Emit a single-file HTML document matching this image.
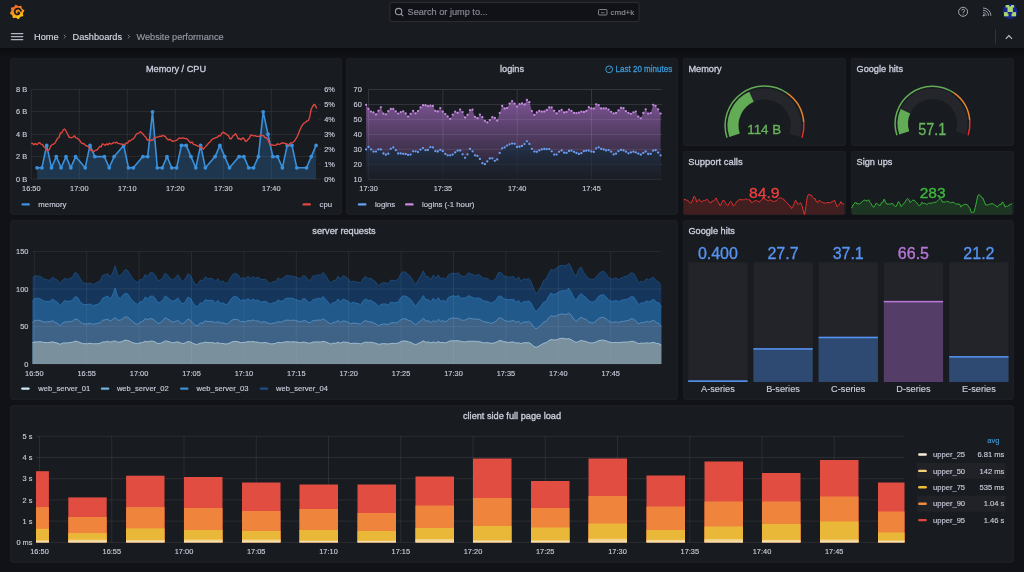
<!DOCTYPE html>
<html><head><meta charset="utf-8"><style>
html,body{margin:0;padding:0;background:#111217;width:1024px;height:572px;overflow:hidden}
svg{display:block;font-family:"Liberation Sans", sans-serif;will-change:transform}
</style></head><body>
<svg width="1024" height="572" viewBox="0 0 1024 572">
<rect width="1024" height="572" fill="#111217"/>
<rect x="0" y="0" width="1024" height="24" fill="#181b1f" />
<line x1="0" y1="24.5" x2="1024" y2="24.5" stroke="rgba(204,204,220,0.06)" stroke-width="1" />
<rect x="0" y="25" width="1024" height="23" fill="#181b1f" />
<defs><linearGradient id="sh" x1="0" y1="0" x2="0" y2="1"><stop offset="0" stop-color="#0b0c0f"/><stop offset="0.6" stop-color="#0e0f12"/><stop offset="1" stop-color="#111217"/></linearGradient></defs>
<rect x="0" y="48" width="1024" height="9" fill="url(#sh)" />
<defs><linearGradient id="lg" x1="0" y1="0" x2="0.3" y2="1"><stop offset="0" stop-color="#f0502a"/><stop offset="0.5" stop-color="#f58a1f"/><stop offset="1" stop-color="#fbc80b"/></linearGradient></defs>
<polygon points="18.3,6.1 18.5,6.1 18.8,6.1 19.0,6.0 19.3,6.0 19.6,5.9 19.9,5.9 20.2,5.8 20.6,5.8 20.9,5.7 21.3,5.7 21.4,6.0 21.5,6.4 21.6,6.7 21.6,7.0 21.7,7.3 21.7,7.6 21.8,7.9 21.9,8.2 21.9,8.4 22.0,8.6 22.2,8.8 22.4,9.0 22.6,9.1 22.8,9.3 23.1,9.4 23.3,9.6 23.6,9.8 23.9,10.0 24.2,10.2 24.5,10.5 24.3,10.8 24.1,11.1 23.9,11.4 23.7,11.7 23.6,11.9 23.4,12.2 23.2,12.4 23.1,12.6 23.0,12.9 22.9,13.1 22.9,13.3 22.9,13.6 23.0,13.8 23.0,14.1 23.1,14.4 23.1,14.7 23.2,15.0 23.2,15.4 23.3,15.7 23.3,16.1 23.0,16.2 22.6,16.3 22.3,16.4 22.0,16.4 21.7,16.5 21.4,16.5 21.1,16.6 20.8,16.7 20.6,16.7 20.4,16.8 20.2,17.0 20.0,17.2 19.9,17.4 19.7,17.6 19.6,17.9 19.4,18.1 19.2,18.4 19.0,18.7 18.8,19.0 18.5,19.3 18.2,19.1 17.9,18.9 17.6,18.7 17.3,18.5 17.1,18.4 16.8,18.2 16.6,18.0 16.4,17.9 16.1,17.8 15.9,17.7 15.7,17.7 15.4,17.7 15.2,17.8 14.9,17.8 14.6,17.9 14.3,17.9 14.0,18.0 13.6,18.0 13.3,18.1 12.9,18.1 12.8,17.8 12.7,17.4 12.6,17.1 12.6,16.8 12.5,16.5 12.5,16.2 12.4,15.9 12.3,15.6 12.3,15.4 12.2,15.2 12.0,15.0 11.8,14.8 11.6,14.7 11.4,14.5 11.1,14.4 10.9,14.2 10.6,14.0 10.3,13.8 10.0,13.6 9.7,13.3 9.9,13.0 10.1,12.7 10.3,12.4 10.5,12.1 10.6,11.9 10.8,11.6 11.0,11.4 11.1,11.2 11.2,10.9 11.3,10.7 11.3,10.5 11.3,10.2 11.2,10.0 11.2,9.7 11.1,9.4 11.1,9.1 11.0,8.8 11.0,8.4 10.9,8.1 10.9,7.7 11.2,7.6 11.6,7.5 11.9,7.4 12.2,7.4 12.5,7.3 12.8,7.3 13.1,7.2 13.4,7.1 13.6,7.1 13.8,7.0 14.0,6.8 14.2,6.6 14.3,6.4 14.5,6.2 14.6,5.9 14.8,5.7 15.0,5.4 15.2,5.1 15.4,4.8 15.7,4.5 16.0,4.7 16.3,4.9 16.6,5.1 16.9,5.3 17.1,5.4 17.4,5.6 17.6,5.8 17.8,5.9 18.1,6.0" fill="url(#lg)"/>
<polyline points="21.0,10.9 20.9,10.6 20.7,10.4 20.6,10.1 20.5,9.9 20.3,9.7 20.1,9.5 19.9,9.4 19.7,9.2 19.5,9.1 19.3,8.9 19.1,8.8 18.9,8.7 18.6,8.7 18.4,8.6 18.2,8.6 17.9,8.6 17.7,8.6 17.5,8.6 17.2,8.6 17.0,8.6 16.8,8.7 16.6,8.8 16.4,8.9 16.2,9.0 16.0,9.1 15.8,9.2 15.7,9.4 15.5,9.6 15.4,9.7 15.2,9.9 15.1,10.1 15.0,10.3 14.9,10.5 14.9,10.7 14.8,10.9 14.8,11.1 14.7,11.3 14.7,11.5 14.7,11.7 14.7,11.9 14.8,12.1 14.8,12.3 14.9,12.5 14.9,12.7 15.0,12.8 15.1,13.0 15.2,13.2 15.3,13.3 15.4,13.5 15.6,13.6 15.7,13.7 15.8,13.9 16.0,14.0 16.1,14.1 16.3,14.1 16.5,14.2 16.6,14.3 16.8,14.3 17.0,14.4 17.1,14.4 17.3,14.4 17.4,14.4 17.6,14.4 17.8,14.4 17.9,14.3 18.1,14.3 18.2,14.2 18.3,14.2 18.5,14.1 18.6,14.1 18.7,14.0 18.8,13.9 18.9,13.8 19.0,13.7 19.1,13.6 19.1,13.5 19.2,13.4 19.2,13.3 19.3,13.2" fill="none" stroke="#181b1f" stroke-width="1.7" stroke-linecap="round"/>
<circle cx="18.5" cy="12.5" r="1.1" fill="#181b1f"/>
<rect x="390" y="2.5" width="249" height="19" rx="2" fill="#111217" stroke="rgba(204,204,220,0.12)" stroke-width="1"/>
<circle cx="398.6" cy="11.6" r="3.2" fill="none" stroke="#9a9aa6" stroke-width="1.1"/><line x1="400.9" y1="13.9" x2="403.2" y2="16.2" stroke="#9a9aa6" stroke-width="1.1"/>
<text x="407.5" y="15.2" font-size="9.2" fill="#8e8e9a" stroke="#8e8e9a" stroke-width="0.14" text-anchor="start" font-weight="normal" >Search or jump to...</text>
<rect x="598.5" y="9.5" width="8.5" height="5.5" rx="1" fill="none" stroke="#8e8e9a" stroke-width="0.9"/><line x1="601" y1="12.8" x2="604.5" y2="12.8" stroke="#8e8e9a" stroke-width="0.8"/>
<text x="610.5" y="14.8" font-size="8" fill="#8e8e9a" stroke="#8e8e9a" stroke-width="0.14" text-anchor="start" font-weight="normal" >cmd+k</text>
<circle cx="963.1" cy="11.8" r="4.5" fill="none" stroke="#a8a8b4" stroke-width="1"/>
<path d="M961.6,10.6 A1.5,1.5 0 1 1 963.2,12.2 L963.2,12.9" fill="none" stroke="#a8a8b4" stroke-width="0.9"/><circle cx="963.2" cy="14.2" r="0.5" fill="#a8a8b4"/>
<circle cx="983.8" cy="15.3" r="1.1" fill="#a8a8b4"/><path d="M983,12.6 A3,3 0 0 1 986.2,15.8 M983,10.3 A5.4,5.4 0 0 1 988.6,15.8 M983,8 A7.7,7.7 0 0 1 990.9,15.8" fill="none" stroke="#a8a8b4" stroke-width="0.9"/>
<circle cx="1010" cy="11.5" r="7.4" fill="#17258f"/>
<g fill="#a9d673"><rect x="1005.6" y="5.1" width="8.6" height="2.4" rx="0.6"/><rect x="1007.5" y="7" width="5.4" height="5.6"/><rect x="1004" y="12.1" width="12.1" height="4.2"/></g>
<g fill="#17258f"><rect x="1009" y="4.6" width="2.2" height="1.8" rx="0.8"/><rect x="1007.4" y="12.1" width="5.2" height="1.7" rx="0.8"/><rect x="1008.5" y="13" width="3" height="4"/></g>
<line x1="11.4" y1="33.5" x2="22.8" y2="33.5" stroke="#b4b4c0" stroke-width="1.25" stroke-linecap="round"/>
<line x1="11.4" y1="36.55" x2="22.8" y2="36.55" stroke="#b4b4c0" stroke-width="1.25" stroke-linecap="round"/>
<line x1="11.4" y1="39.6" x2="22.8" y2="39.6" stroke="#b4b4c0" stroke-width="1.25" stroke-linecap="round"/>
<text x="34.0" y="39.6" font-size="9.2" fill="#d8d8e4" stroke="#d8d8e4" stroke-width="0.14" text-anchor="start" font-weight="normal" >Home</text>
<path d="M63.8,34.8 L65.8,36.6 L63.8,38.4" fill="none" stroke="#8e8e9a" stroke-width="0.8"/>
<text x="72.5" y="39.6" font-size="9.2" fill="#d8d8e4" stroke="#d8d8e4" stroke-width="0.14" text-anchor="start" font-weight="normal" >Dashboards</text>
<path d="M127.8,34.8 L129.8,36.6 L127.8,38.4" fill="none" stroke="#8e8e9a" stroke-width="0.8"/>
<text x="136.5" y="39.6" font-size="9.2" fill="#9a9aa6" stroke="#9a9aa6" stroke-width="0.14" text-anchor="start" font-weight="normal" >Website performance</text>
<line x1="995.5" y1="29.5" x2="995.5" y2="43.5" stroke="rgba(204,204,220,0.15)" stroke-width="1" />
<path d="M1005.8,38.8 L1008.9,35.6 L1012,38.8" fill="none" stroke="#c4c4d0" stroke-width="1.1"/>
<rect x="10.5" y="58.5" width="331" height="156" rx="2" fill="#181b1f" stroke="rgba(204,204,220,0.045)" stroke-width="1"/>
<text x="176.0" y="71.8" font-size="9.2" fill="#ccccdc" stroke="#ccccdc" stroke-width="0.32" text-anchor="middle" font-weight="normal" >Memory / CPU</text>
<line x1="31.3" y1="179.0" x2="318" y2="179.0" stroke="rgba(204,204,220,0.10)" stroke-width="1" />
<text x="27.2" y="181.6" font-size="7.4" fill="#ccccdc" stroke="#ccccdc" stroke-width="0.14" text-anchor="end" font-weight="normal" >0 B</text>
<line x1="31.3" y1="156.4" x2="318" y2="156.4" stroke="rgba(204,204,220,0.10)" stroke-width="1" />
<text x="27.2" y="159.0" font-size="7.4" fill="#ccccdc" stroke="#ccccdc" stroke-width="0.14" text-anchor="end" font-weight="normal" >2 B</text>
<line x1="31.3" y1="134.3" x2="318" y2="134.3" stroke="rgba(204,204,220,0.10)" stroke-width="1" />
<text x="27.2" y="136.9" font-size="7.4" fill="#ccccdc" stroke="#ccccdc" stroke-width="0.14" text-anchor="end" font-weight="normal" >4 B</text>
<line x1="31.3" y1="111.6" x2="318" y2="111.6" stroke="rgba(204,204,220,0.10)" stroke-width="1" />
<text x="27.2" y="114.2" font-size="7.4" fill="#ccccdc" stroke="#ccccdc" stroke-width="0.14" text-anchor="end" font-weight="normal" >6 B</text>
<line x1="31.3" y1="89.4" x2="318" y2="89.4" stroke="rgba(204,204,220,0.10)" stroke-width="1" />
<text x="27.2" y="92.0" font-size="7.4" fill="#ccccdc" stroke="#ccccdc" stroke-width="0.14" text-anchor="end" font-weight="normal" >8 B</text>
<line x1="318" y1="179.0" x2="321" y2="179.0" stroke="rgba(204,204,220,0.10)" stroke-width="1" />
<text x="324.2" y="181.6" font-size="7.4" fill="#ccccdc" stroke="#ccccdc" stroke-width="0.14" text-anchor="start" font-weight="normal" >0%</text>
<line x1="318" y1="164.07" x2="321" y2="164.07" stroke="rgba(204,204,220,0.10)" stroke-width="1" />
<text x="324.2" y="166.7" font-size="7.4" fill="#ccccdc" stroke="#ccccdc" stroke-width="0.14" text-anchor="start" font-weight="normal" >1%</text>
<line x1="318" y1="149.14" x2="321" y2="149.14" stroke="rgba(204,204,220,0.10)" stroke-width="1" />
<text x="324.2" y="151.7" font-size="7.4" fill="#ccccdc" stroke="#ccccdc" stroke-width="0.14" text-anchor="start" font-weight="normal" >2%</text>
<line x1="318" y1="134.21" x2="321" y2="134.21" stroke="rgba(204,204,220,0.10)" stroke-width="1" />
<text x="324.2" y="136.8" font-size="7.4" fill="#ccccdc" stroke="#ccccdc" stroke-width="0.14" text-anchor="start" font-weight="normal" >3%</text>
<line x1="318" y1="119.28" x2="321" y2="119.28" stroke="rgba(204,204,220,0.10)" stroke-width="1" />
<text x="324.2" y="121.9" font-size="7.4" fill="#ccccdc" stroke="#ccccdc" stroke-width="0.14" text-anchor="start" font-weight="normal" >4%</text>
<line x1="318" y1="104.35" x2="321" y2="104.35" stroke="rgba(204,204,220,0.10)" stroke-width="1" />
<text x="324.2" y="106.9" font-size="7.4" fill="#ccccdc" stroke="#ccccdc" stroke-width="0.14" text-anchor="start" font-weight="normal" >5%</text>
<line x1="318" y1="89.42" x2="321" y2="89.42" stroke="rgba(204,204,220,0.10)" stroke-width="1" />
<text x="324.2" y="92.0" font-size="7.4" fill="#ccccdc" stroke="#ccccdc" stroke-width="0.14" text-anchor="start" font-weight="normal" >6%</text>
<line x1="31.3" y1="89.4" x2="31.3" y2="179" stroke="rgba(204,204,220,0.10)" stroke-width="1" />
<text x="31.3" y="190.6" font-size="7.4" fill="#ccccdc" stroke="#ccccdc" stroke-width="0.14" text-anchor="middle" font-weight="normal" >16:50</text>
<line x1="79.3" y1="89.4" x2="79.3" y2="179" stroke="rgba(204,204,220,0.10)" stroke-width="1" />
<text x="79.3" y="190.6" font-size="7.4" fill="#ccccdc" stroke="#ccccdc" stroke-width="0.14" text-anchor="middle" font-weight="normal" >17:00</text>
<line x1="127.3" y1="89.4" x2="127.3" y2="179" stroke="rgba(204,204,220,0.10)" stroke-width="1" />
<text x="127.3" y="190.6" font-size="7.4" fill="#ccccdc" stroke="#ccccdc" stroke-width="0.14" text-anchor="middle" font-weight="normal" >17:10</text>
<line x1="175.3" y1="89.4" x2="175.3" y2="179" stroke="rgba(204,204,220,0.10)" stroke-width="1" />
<text x="175.3" y="190.6" font-size="7.4" fill="#ccccdc" stroke="#ccccdc" stroke-width="0.14" text-anchor="middle" font-weight="normal" >17:20</text>
<line x1="223.3" y1="89.4" x2="223.3" y2="179" stroke="rgba(204,204,220,0.10)" stroke-width="1" />
<text x="223.3" y="190.6" font-size="7.4" fill="#ccccdc" stroke="#ccccdc" stroke-width="0.14" text-anchor="middle" font-weight="normal" >17:30</text>
<line x1="271.3" y1="89.4" x2="271.3" y2="179" stroke="rgba(204,204,220,0.10)" stroke-width="1" />
<text x="271.3" y="190.6" font-size="7.4" fill="#ccccdc" stroke="#ccccdc" stroke-width="0.14" text-anchor="middle" font-weight="normal" >17:40</text>
<polygon points="37.1,179.0 37.1,167.8 41.9,167.8 46.7,145.4 51.5,167.8 56.3,156.6 61.1,167.8 66.0,156.6 70.8,167.8 75.6,156.6 85.2,167.8 90.0,145.4 94.8,156.6 104.4,156.6 109.2,167.8 114.1,156.6 123.7,145.4 128.5,167.8 133.3,167.8 142.9,156.6 147.7,156.6 152.5,111.8 157.3,167.8 162.2,167.8 167.0,156.6 171.8,167.8 176.6,167.8 181.4,145.4 186.2,145.4 191.0,156.6 195.8,167.8 200.6,145.4 205.4,167.8 215.1,156.6 219.9,145.4 224.7,156.6 229.5,167.8 239.1,156.6 243.9,156.6 248.7,167.8 253.5,167.8 258.4,156.6 263.2,111.8 268.0,134.2 272.8,156.6 277.6,156.6 282.4,167.8 287.2,145.4 292.0,145.4 296.8,167.8 306.5,167.8 311.3,156.6 316.1,145.4 316.1,179.0" fill="rgba(50,140,220,0.25)"/>
<polyline points="37.1,167.8 41.9,167.8 46.7,145.4 51.5,167.8 56.3,156.6 61.1,167.8 66.0,156.6 70.8,167.8 75.6,156.6 85.2,167.8 90.0,145.4 94.8,156.6 104.4,156.6 109.2,167.8 114.1,156.6 123.7,145.4 128.5,167.8 133.3,167.8 142.9,156.6 147.7,156.6 152.5,111.8 157.3,167.8 162.2,167.8 167.0,156.6 171.8,167.8 176.6,167.8 181.4,145.4 186.2,145.4 191.0,156.6 195.8,167.8 200.6,145.4 205.4,167.8 215.1,156.6 219.9,145.4 224.7,156.6 229.5,167.8 239.1,156.6 243.9,156.6 248.7,167.8 253.5,167.8 258.4,156.6 263.2,111.8 268.0,134.2 272.8,156.6 277.6,156.6 282.4,167.8 287.2,145.4 292.0,145.4 296.8,167.8 306.5,167.8 311.3,156.6 316.1,145.4" fill="none" stroke="#3a90da" stroke-width="1.6" stroke-linejoin="round"/>
<circle cx="37.1" cy="167.8" r="1.9" fill="#3a90da"/>
<circle cx="41.9" cy="167.8" r="1.9" fill="#3a90da"/>
<circle cx="46.7" cy="145.4" r="1.9" fill="#3a90da"/>
<circle cx="51.5" cy="167.8" r="1.9" fill="#3a90da"/>
<circle cx="56.3" cy="156.6" r="1.9" fill="#3a90da"/>
<circle cx="61.1" cy="167.8" r="1.9" fill="#3a90da"/>
<circle cx="66.0" cy="156.6" r="1.9" fill="#3a90da"/>
<circle cx="70.8" cy="167.8" r="1.9" fill="#3a90da"/>
<circle cx="75.6" cy="156.6" r="1.9" fill="#3a90da"/>
<circle cx="85.2" cy="167.8" r="1.9" fill="#3a90da"/>
<circle cx="90.0" cy="145.4" r="1.9" fill="#3a90da"/>
<circle cx="94.8" cy="156.6" r="1.9" fill="#3a90da"/>
<circle cx="104.4" cy="156.6" r="1.9" fill="#3a90da"/>
<circle cx="109.2" cy="167.8" r="1.9" fill="#3a90da"/>
<circle cx="114.1" cy="156.6" r="1.9" fill="#3a90da"/>
<circle cx="123.7" cy="145.4" r="1.9" fill="#3a90da"/>
<circle cx="128.5" cy="167.8" r="1.9" fill="#3a90da"/>
<circle cx="133.3" cy="167.8" r="1.9" fill="#3a90da"/>
<circle cx="142.9" cy="156.6" r="1.9" fill="#3a90da"/>
<circle cx="147.7" cy="156.6" r="1.9" fill="#3a90da"/>
<circle cx="152.5" cy="111.8" r="1.9" fill="#3a90da"/>
<circle cx="157.3" cy="167.8" r="1.9" fill="#3a90da"/>
<circle cx="162.2" cy="167.8" r="1.9" fill="#3a90da"/>
<circle cx="167.0" cy="156.6" r="1.9" fill="#3a90da"/>
<circle cx="171.8" cy="167.8" r="1.9" fill="#3a90da"/>
<circle cx="176.6" cy="167.8" r="1.9" fill="#3a90da"/>
<circle cx="181.4" cy="145.4" r="1.9" fill="#3a90da"/>
<circle cx="186.2" cy="145.4" r="1.9" fill="#3a90da"/>
<circle cx="191.0" cy="156.6" r="1.9" fill="#3a90da"/>
<circle cx="195.8" cy="167.8" r="1.9" fill="#3a90da"/>
<circle cx="200.6" cy="145.4" r="1.9" fill="#3a90da"/>
<circle cx="205.4" cy="167.8" r="1.9" fill="#3a90da"/>
<circle cx="215.1" cy="156.6" r="1.9" fill="#3a90da"/>
<circle cx="219.9" cy="145.4" r="1.9" fill="#3a90da"/>
<circle cx="224.7" cy="156.6" r="1.9" fill="#3a90da"/>
<circle cx="229.5" cy="167.8" r="1.9" fill="#3a90da"/>
<circle cx="239.1" cy="156.6" r="1.9" fill="#3a90da"/>
<circle cx="243.9" cy="156.6" r="1.9" fill="#3a90da"/>
<circle cx="248.7" cy="167.8" r="1.9" fill="#3a90da"/>
<circle cx="253.5" cy="167.8" r="1.9" fill="#3a90da"/>
<circle cx="258.4" cy="156.6" r="1.9" fill="#3a90da"/>
<circle cx="263.2" cy="111.8" r="1.9" fill="#3a90da"/>
<circle cx="268.0" cy="134.2" r="1.9" fill="#3a90da"/>
<circle cx="272.8" cy="156.6" r="1.9" fill="#3a90da"/>
<circle cx="277.6" cy="156.6" r="1.9" fill="#3a90da"/>
<circle cx="282.4" cy="167.8" r="1.9" fill="#3a90da"/>
<circle cx="287.2" cy="145.4" r="1.9" fill="#3a90da"/>
<circle cx="292.0" cy="145.4" r="1.9" fill="#3a90da"/>
<circle cx="296.8" cy="167.8" r="1.9" fill="#3a90da"/>
<circle cx="306.5" cy="167.8" r="1.9" fill="#3a90da"/>
<circle cx="311.3" cy="156.6" r="1.9" fill="#3a90da"/>
<circle cx="316.1" cy="145.4" r="1.9" fill="#3a90da"/>
<polyline points="31.1,143.5 32.5,143.3 33.9,144.7 35.3,143.5 36.7,144.6 38.1,143.7 39.5,142.4 40.9,144.1 42.3,144.3 43.7,146.7 45.1,147.7 46.5,149.9 47.9,150.7 49.3,149.5 50.7,145.9 52.1,144.7 53.5,144.2 54.9,143.2 56.3,140.6 57.7,138.2 59.1,137.3 60.5,132.8 61.9,132.8 63.3,129.8 64.7,129.0 66.1,131.1 67.5,133.7 68.9,137.0 70.3,137.5 71.7,137.7 73.1,137.0 74.5,135.8 75.9,137.8 77.3,138.2 78.7,139.5 80.1,140.9 81.5,143.1 82.9,143.5 84.3,144.0 85.7,145.5 87.1,146.0 88.5,146.9 89.9,149.4 91.3,150.5 92.7,150.7 94.1,151.6 95.5,150.3 96.9,150.0 98.3,148.5 99.7,146.4 101.1,146.9 102.5,143.8 103.9,144.5 105.3,145.3 106.7,143.9 108.1,144.7 109.5,143.1 110.9,144.0 112.3,143.6 113.7,142.4 115.1,143.0 116.5,142.1 117.9,143.4 119.3,143.6 120.7,144.0 122.1,144.1 123.5,144.8 124.9,144.6 126.3,143.0 127.7,143.0 129.1,140.7 130.5,140.9 131.9,139.4 133.3,138.8 134.7,137.1 136.1,134.5 137.5,133.4 138.9,133.1 140.3,131.6 141.7,132.8 143.1,134.2 144.5,136.2 145.9,137.3 147.3,140.1 148.7,139.6 150.1,140.5 151.5,140.0 152.9,140.3 154.3,137.5 155.7,137.6 157.1,137.0 158.5,136.9 159.9,136.1 161.3,136.5 162.7,135.4 164.1,136.0 165.5,136.5 166.9,138.8 168.3,140.0 169.7,139.1 171.1,140.2 172.5,141.4 173.9,141.0 175.3,140.7 176.7,140.3 178.1,139.0 179.5,137.9 180.9,138.5 182.3,137.9 183.7,138.0 185.1,138.6 186.5,138.4 187.9,139.7 189.3,141.6 190.7,142.9 192.1,141.9 193.5,144.4 194.9,144.6 196.3,145.3 197.7,146.2 199.1,146.3 200.5,147.3 201.9,147.2 203.3,149.2 204.7,147.6 206.1,145.9 207.5,144.5 208.9,142.8 210.3,141.8 211.7,139.7 213.1,138.7 214.5,138.3 215.9,137.5 217.3,137.4 218.7,135.6 220.1,136.0 221.5,133.8 222.9,132.1 224.3,132.9 225.7,133.7 227.1,134.8 228.5,135.6 229.9,138.7 231.3,138.7 232.7,136.3 234.1,135.2 235.5,133.6 236.9,136.0 238.3,138.9 239.7,138.5 241.1,139.7 242.5,138.0 243.9,138.4 245.3,141.3 246.7,141.0 248.1,139.3 249.5,137.9 250.9,134.9 252.3,135.4 253.7,135.8 255.1,135.7 256.5,136.3 257.9,136.4 259.3,136.4 260.7,135.0 262.1,135.5 263.5,135.7 264.9,137.6 266.3,137.7 267.7,139.3 269.1,142.7 270.5,145.1 271.9,145.0 273.3,145.2 274.7,145.4 276.1,145.1 277.5,143.8 278.9,144.4 280.3,143.9 281.7,143.0 283.1,142.9 284.5,143.4 285.9,143.5 287.3,144.6 288.7,145.3 290.1,143.0 291.5,143.2 292.9,142.3 294.3,141.3 295.7,139.0 297.1,136.8 298.5,133.5 299.9,130.1 301.3,126.9 302.7,124.6 304.1,123.0 305.5,122.3 306.9,120.9 308.3,120.7 309.7,116.9 311.1,109.5 312.5,106.8 313.9,104.3 315.3,105.4 316.7,108.5" fill="none" stroke="#e0473f" stroke-width="1.35" stroke-linejoin="round"/>
<rect x="21.5" y="203.2" width="8.4" height="2.4" rx="1.2" fill="#3d93dc"/>
<text x="38.3" y="206.6" font-size="7.8" fill="#ccccdc" stroke="#ccccdc" stroke-width="0.14" text-anchor="start" font-weight="normal" >memory</text>
<rect x="302.5" y="203.2" width="8.4" height="2.4" rx="1.2" fill="#e0473f"/>
<text x="319.5" y="206.6" font-size="7.8" fill="#ccccdc" stroke="#ccccdc" stroke-width="0.14" text-anchor="start" font-weight="normal" >cpu</text>
<rect x="346.5" y="58.5" width="331" height="156" rx="2" fill="#181b1f" stroke="rgba(204,204,220,0.045)" stroke-width="1"/>
<text x="512.0" y="71.8" font-size="9.2" fill="#ccccdc" stroke="#ccccdc" stroke-width="0.32" text-anchor="middle" font-weight="normal" >logins</text>
<circle cx="609.2" cy="69.3" r="3.4" fill="none" stroke="#3d9bd6" stroke-width="1"/><path d="M609.2,69.3 L610.6,67.6" stroke="#3d9bd6" stroke-width="0.9"/>
<text x="615.5" y="71.6" font-size="8.8" fill="#3a97d4" stroke="#3a97d4" stroke-width="0.32" text-anchor="start" font-weight="normal" textLength="56.7" lengthAdjust="spacingAndGlyphs">Last 20 minutes</text>
<line x1="368.3" y1="179.2" x2="662" y2="179.2" stroke="rgba(204,204,220,0.10)" stroke-width="1" />
<text x="361.8" y="181.8" font-size="7.4" fill="#ccccdc" stroke="#ccccdc" stroke-width="0.14" text-anchor="end" font-weight="normal" >10</text>
<line x1="368.3" y1="164.25" x2="662" y2="164.25" stroke="rgba(204,204,220,0.10)" stroke-width="1" />
<text x="361.8" y="166.8" font-size="7.4" fill="#ccccdc" stroke="#ccccdc" stroke-width="0.14" text-anchor="end" font-weight="normal" >20</text>
<line x1="368.3" y1="149.29999999999998" x2="662" y2="149.29999999999998" stroke="rgba(204,204,220,0.10)" stroke-width="1" />
<text x="361.8" y="151.9" font-size="7.4" fill="#ccccdc" stroke="#ccccdc" stroke-width="0.14" text-anchor="end" font-weight="normal" >30</text>
<line x1="368.3" y1="134.35" x2="662" y2="134.35" stroke="rgba(204,204,220,0.10)" stroke-width="1" />
<text x="361.8" y="136.9" font-size="7.4" fill="#ccccdc" stroke="#ccccdc" stroke-width="0.14" text-anchor="end" font-weight="normal" >40</text>
<line x1="368.3" y1="119.39999999999999" x2="662" y2="119.39999999999999" stroke="rgba(204,204,220,0.10)" stroke-width="1" />
<text x="361.8" y="122.0" font-size="7.4" fill="#ccccdc" stroke="#ccccdc" stroke-width="0.14" text-anchor="end" font-weight="normal" >50</text>
<line x1="368.3" y1="104.44999999999999" x2="662" y2="104.44999999999999" stroke="rgba(204,204,220,0.10)" stroke-width="1" />
<text x="361.8" y="107.0" font-size="7.4" fill="#ccccdc" stroke="#ccccdc" stroke-width="0.14" text-anchor="end" font-weight="normal" >60</text>
<line x1="368.3" y1="89.5" x2="662" y2="89.5" stroke="rgba(204,204,220,0.10)" stroke-width="1" />
<text x="361.8" y="92.1" font-size="7.4" fill="#ccccdc" stroke="#ccccdc" stroke-width="0.14" text-anchor="end" font-weight="normal" >70</text>
<line x1="368.6" y1="89.5" x2="368.6" y2="179.2" stroke="rgba(204,204,220,0.10)" stroke-width="1" />
<text x="368.6" y="190.6" font-size="7.4" fill="#ccccdc" stroke="#ccccdc" stroke-width="0.14" text-anchor="middle" font-weight="normal" >17:30</text>
<line x1="442.90000000000003" y1="89.5" x2="442.90000000000003" y2="179.2" stroke="rgba(204,204,220,0.10)" stroke-width="1" />
<text x="442.9" y="190.6" font-size="7.4" fill="#ccccdc" stroke="#ccccdc" stroke-width="0.14" text-anchor="middle" font-weight="normal" >17:35</text>
<line x1="517.2" y1="89.5" x2="517.2" y2="179.2" stroke="rgba(204,204,220,0.10)" stroke-width="1" />
<text x="517.2" y="190.6" font-size="7.4" fill="#ccccdc" stroke="#ccccdc" stroke-width="0.14" text-anchor="middle" font-weight="normal" >17:40</text>
<line x1="591.5" y1="89.5" x2="591.5" y2="179.2" stroke="rgba(204,204,220,0.10)" stroke-width="1" />
<text x="591.5" y="190.6" font-size="7.4" fill="#ccccdc" stroke="#ccccdc" stroke-width="0.14" text-anchor="middle" font-weight="normal" >17:45</text>
<defs><linearGradient id="gp" x1="0" y1="0" x2="0" y2="1"><stop offset="0" stop-color="#b877d9" stop-opacity="0.62"/><stop offset="1" stop-color="#b877d9" stop-opacity="0.03"/></linearGradient>
<linearGradient id="gb" gradientUnits="userSpaceOnUse" x1="0" y1="140" x2="0" y2="179"><stop offset="0" stop-color="#3b6bb5" stop-opacity="0.45"/><stop offset="1" stop-color="#3b6bb5" stop-opacity="0.05"/></linearGradient></defs>
<polygon points="366.1,179.2 366.1,104.8 368.5,108.8 371.0,111.6 373.5,112.5 376.0,114.5 378.4,110.8 380.9,107.3 383.4,113.6 385.9,114.3 388.3,111.2 390.8,109.0 393.3,108.9 395.8,111.3 398.2,113.6 400.7,112.1 403.2,111.3 405.7,113.5 408.1,116.6 410.6,113.9 413.1,111.0 415.6,113.3 418.0,111.1 420.5,107.4 423.0,105.2 425.5,105.2 427.9,106.1 430.4,105.7 432.9,106.0 435.4,110.9 437.8,111.4 440.3,108.1 442.8,111.7 445.3,114.1 447.7,116.5 450.2,118.8 452.7,114.7 455.2,111.7 457.6,112.8 460.1,109.6 462.6,112.1 465.1,117.5 467.5,114.9 470.0,110.2 472.5,109.7 475.0,116.9 477.4,118.2 479.9,114.6 482.4,117.1 484.9,120.9 487.3,122.4 489.8,120.1 492.3,117.2 494.8,118.0 497.2,120.5 499.7,113.1 502.2,106.0 504.7,108.5 507.1,107.9 509.6,103.6 512.1,101.1 514.6,103.7 517.0,106.5 519.5,104.2 522.0,103.5 524.5,104.5 526.9,100.0 529.4,102.2 531.9,111.1 534.4,114.9 536.8,112.5 539.3,111.0 541.8,111.7 544.3,111.5 546.7,110.0 549.2,107.4 551.7,107.3 554.2,110.8 556.6,113.4 559.1,111.1 561.6,110.0 564.1,112.5 566.5,112.0 569.0,109.6 571.5,110.9 574.0,112.9 576.4,113.1 578.9,112.6 581.4,111.6 583.9,112.0 586.3,111.0 588.8,107.2 591.3,108.3 593.8,108.6 596.2,104.3 598.7,105.1 601.2,108.5 603.7,108.3 606.1,108.3 608.6,109.7 611.1,111.8 613.6,113.4 616.0,112.9 618.5,110.4 621.0,107.8 623.5,108.2 625.9,111.2 628.4,112.9 630.9,113.8 633.4,112.4 635.8,111.6 638.3,116.7 640.8,118.3 643.3,113.0 645.7,109.4 648.2,113.6 650.7,113.1 653.2,104.8 655.6,105.8 658.1,109.4 660.6,113.6 660.6,179.2" fill="url(#gp)"/>
<defs><linearGradient id="gb2" gradientUnits="userSpaceOnUse" x1="0" y1="140" x2="0" y2="179"><stop offset="0" stop-color="#24334c"/><stop offset="1" stop-color="#1a1d24"/></linearGradient></defs>
<polygon points="366.1,179.2 366.1,149.4 368.5,147.0 371.0,149.4 373.5,151.6 376.0,151.6 378.4,149.4 380.9,149.5 383.4,153.5 385.9,154.7 388.3,153.7 390.8,148.8 393.3,147.5 395.8,150.2 398.2,153.5 400.7,153.5 403.2,153.8 405.7,154.0 408.1,154.9 410.6,154.6 413.1,151.3 415.6,151.3 418.0,152.1 420.5,149.7 423.0,148.1 425.5,150.2 427.9,150.0 430.4,147.2 432.9,147.4 435.4,151.1 437.8,151.5 440.3,149.9 442.8,151.2 445.3,153.9 447.7,155.3 450.2,155.3 452.7,154.6 455.2,152.4 457.6,150.7 460.1,150.5 462.6,154.3 465.1,157.8 467.5,154.4 470.0,149.0 472.5,151.3 475.0,155.3 477.4,155.9 479.9,159.0 482.4,163.2 484.9,164.2 487.3,161.4 489.8,158.5 492.3,158.3 494.8,160.8 497.2,159.5 499.7,152.9 502.2,148.4 504.7,147.4 507.1,145.6 509.6,144.3 512.1,143.6 514.6,143.8 517.0,146.9 519.5,146.7 522.0,145.9 524.5,144.1 526.9,141.3 529.4,144.0 531.9,148.8 534.4,151.6 536.8,151.8 539.3,150.4 541.8,149.4 544.3,149.0 546.7,149.2 549.2,149.1 551.7,151.3 554.2,154.6 556.6,154.6 559.1,151.8 561.6,150.5 564.1,152.7 566.5,152.9 569.0,151.0 571.5,150.7 574.0,151.8 576.4,153.0 578.9,153.9 581.4,153.2 583.9,151.2 586.3,150.7 588.8,150.6 591.3,151.6 593.8,151.9 596.2,148.4 598.7,147.3 601.2,148.9 603.7,149.5 606.1,150.4 608.6,150.1 611.1,151.7 613.6,154.4 616.0,153.7 618.5,151.2 621.0,149.9 623.5,150.4 625.9,151.7 628.4,153.3 630.9,152.4 633.4,151.7 635.8,152.4 638.3,153.6 640.8,154.7 643.3,152.9 645.7,151.5 648.2,154.0 650.7,153.8 653.2,150.7 655.6,150.2 658.1,152.6 660.6,155.3 660.6,179.2" fill="url(#gb2)"/>
<line x1="368.3" y1="179.2" x2="662" y2="179.2" stroke="rgba(204,204,220,0.06)" stroke-width="1" />
<line x1="368.3" y1="164.25" x2="662" y2="164.25" stroke="rgba(204,204,220,0.06)" stroke-width="1" />
<line x1="368.3" y1="149.29999999999998" x2="662" y2="149.29999999999998" stroke="rgba(204,204,220,0.06)" stroke-width="1" />
<line x1="368.3" y1="134.35" x2="662" y2="134.35" stroke="rgba(204,204,220,0.06)" stroke-width="1" />
<line x1="368.3" y1="119.39999999999999" x2="662" y2="119.39999999999999" stroke="rgba(204,204,220,0.06)" stroke-width="1" />
<line x1="368.3" y1="104.44999999999999" x2="662" y2="104.44999999999999" stroke="rgba(204,204,220,0.06)" stroke-width="1" />
<line x1="368.3" y1="89.5" x2="662" y2="89.5" stroke="rgba(204,204,220,0.06)" stroke-width="1" />
<line x1="368.6" y1="89.5" x2="368.6" y2="179.2" stroke="rgba(204,204,220,0.06)" stroke-width="1" />
<line x1="442.90000000000003" y1="89.5" x2="442.90000000000003" y2="179.2" stroke="rgba(204,204,220,0.06)" stroke-width="1" />
<line x1="517.2" y1="89.5" x2="517.2" y2="179.2" stroke="rgba(204,204,220,0.06)" stroke-width="1" />
<line x1="591.5" y1="89.5" x2="591.5" y2="179.2" stroke="rgba(204,204,220,0.06)" stroke-width="1" />
<circle cx="366.1" cy="104.8" r="1.15" fill="#c58ae0"/>
<circle cx="368.5" cy="108.8" r="1.15" fill="#c58ae0"/>
<circle cx="371.0" cy="111.6" r="1.15" fill="#c58ae0"/>
<circle cx="373.5" cy="112.5" r="1.15" fill="#c58ae0"/>
<circle cx="376.0" cy="114.5" r="1.15" fill="#c58ae0"/>
<circle cx="378.4" cy="110.8" r="1.15" fill="#c58ae0"/>
<circle cx="380.9" cy="107.3" r="1.15" fill="#c58ae0"/>
<circle cx="383.4" cy="113.6" r="1.15" fill="#c58ae0"/>
<circle cx="385.9" cy="114.3" r="1.15" fill="#c58ae0"/>
<circle cx="388.3" cy="111.2" r="1.15" fill="#c58ae0"/>
<circle cx="390.8" cy="109.0" r="1.15" fill="#c58ae0"/>
<circle cx="393.3" cy="108.9" r="1.15" fill="#c58ae0"/>
<circle cx="395.8" cy="111.3" r="1.15" fill="#c58ae0"/>
<circle cx="398.2" cy="113.6" r="1.15" fill="#c58ae0"/>
<circle cx="400.7" cy="112.1" r="1.15" fill="#c58ae0"/>
<circle cx="403.2" cy="111.3" r="1.15" fill="#c58ae0"/>
<circle cx="405.7" cy="113.5" r="1.15" fill="#c58ae0"/>
<circle cx="408.1" cy="116.6" r="1.15" fill="#c58ae0"/>
<circle cx="410.6" cy="113.9" r="1.15" fill="#c58ae0"/>
<circle cx="413.1" cy="111.0" r="1.15" fill="#c58ae0"/>
<circle cx="415.6" cy="113.3" r="1.15" fill="#c58ae0"/>
<circle cx="418.0" cy="111.1" r="1.15" fill="#c58ae0"/>
<circle cx="420.5" cy="107.4" r="1.15" fill="#c58ae0"/>
<circle cx="423.0" cy="105.2" r="1.15" fill="#c58ae0"/>
<circle cx="425.5" cy="105.2" r="1.15" fill="#c58ae0"/>
<circle cx="427.9" cy="106.1" r="1.15" fill="#c58ae0"/>
<circle cx="430.4" cy="105.7" r="1.15" fill="#c58ae0"/>
<circle cx="432.9" cy="106.0" r="1.15" fill="#c58ae0"/>
<circle cx="435.4" cy="110.9" r="1.15" fill="#c58ae0"/>
<circle cx="437.8" cy="111.4" r="1.15" fill="#c58ae0"/>
<circle cx="440.3" cy="108.1" r="1.15" fill="#c58ae0"/>
<circle cx="442.8" cy="111.7" r="1.15" fill="#c58ae0"/>
<circle cx="445.3" cy="114.1" r="1.15" fill="#c58ae0"/>
<circle cx="447.7" cy="116.5" r="1.15" fill="#c58ae0"/>
<circle cx="450.2" cy="118.8" r="1.15" fill="#c58ae0"/>
<circle cx="452.7" cy="114.7" r="1.15" fill="#c58ae0"/>
<circle cx="455.2" cy="111.7" r="1.15" fill="#c58ae0"/>
<circle cx="457.6" cy="112.8" r="1.15" fill="#c58ae0"/>
<circle cx="460.1" cy="109.6" r="1.15" fill="#c58ae0"/>
<circle cx="462.6" cy="112.1" r="1.15" fill="#c58ae0"/>
<circle cx="465.1" cy="117.5" r="1.15" fill="#c58ae0"/>
<circle cx="467.5" cy="114.9" r="1.15" fill="#c58ae0"/>
<circle cx="470.0" cy="110.2" r="1.15" fill="#c58ae0"/>
<circle cx="472.5" cy="109.7" r="1.15" fill="#c58ae0"/>
<circle cx="475.0" cy="116.9" r="1.15" fill="#c58ae0"/>
<circle cx="477.4" cy="118.2" r="1.15" fill="#c58ae0"/>
<circle cx="479.9" cy="114.6" r="1.15" fill="#c58ae0"/>
<circle cx="482.4" cy="117.1" r="1.15" fill="#c58ae0"/>
<circle cx="484.9" cy="120.9" r="1.15" fill="#c58ae0"/>
<circle cx="487.3" cy="122.4" r="1.15" fill="#c58ae0"/>
<circle cx="489.8" cy="120.1" r="1.15" fill="#c58ae0"/>
<circle cx="492.3" cy="117.2" r="1.15" fill="#c58ae0"/>
<circle cx="494.8" cy="118.0" r="1.15" fill="#c58ae0"/>
<circle cx="497.2" cy="120.5" r="1.15" fill="#c58ae0"/>
<circle cx="499.7" cy="113.1" r="1.15" fill="#c58ae0"/>
<circle cx="502.2" cy="106.0" r="1.15" fill="#c58ae0"/>
<circle cx="504.7" cy="108.5" r="1.15" fill="#c58ae0"/>
<circle cx="507.1" cy="107.9" r="1.15" fill="#c58ae0"/>
<circle cx="509.6" cy="103.6" r="1.15" fill="#c58ae0"/>
<circle cx="512.1" cy="101.1" r="1.15" fill="#c58ae0"/>
<circle cx="514.6" cy="103.7" r="1.15" fill="#c58ae0"/>
<circle cx="517.0" cy="106.5" r="1.15" fill="#c58ae0"/>
<circle cx="519.5" cy="104.2" r="1.15" fill="#c58ae0"/>
<circle cx="522.0" cy="103.5" r="1.15" fill="#c58ae0"/>
<circle cx="524.5" cy="104.5" r="1.15" fill="#c58ae0"/>
<circle cx="526.9" cy="100.0" r="1.15" fill="#c58ae0"/>
<circle cx="529.4" cy="102.2" r="1.15" fill="#c58ae0"/>
<circle cx="531.9" cy="111.1" r="1.15" fill="#c58ae0"/>
<circle cx="534.4" cy="114.9" r="1.15" fill="#c58ae0"/>
<circle cx="536.8" cy="112.5" r="1.15" fill="#c58ae0"/>
<circle cx="539.3" cy="111.0" r="1.15" fill="#c58ae0"/>
<circle cx="541.8" cy="111.7" r="1.15" fill="#c58ae0"/>
<circle cx="544.3" cy="111.5" r="1.15" fill="#c58ae0"/>
<circle cx="546.7" cy="110.0" r="1.15" fill="#c58ae0"/>
<circle cx="549.2" cy="107.4" r="1.15" fill="#c58ae0"/>
<circle cx="551.7" cy="107.3" r="1.15" fill="#c58ae0"/>
<circle cx="554.2" cy="110.8" r="1.15" fill="#c58ae0"/>
<circle cx="556.6" cy="113.4" r="1.15" fill="#c58ae0"/>
<circle cx="559.1" cy="111.1" r="1.15" fill="#c58ae0"/>
<circle cx="561.6" cy="110.0" r="1.15" fill="#c58ae0"/>
<circle cx="564.1" cy="112.5" r="1.15" fill="#c58ae0"/>
<circle cx="566.5" cy="112.0" r="1.15" fill="#c58ae0"/>
<circle cx="569.0" cy="109.6" r="1.15" fill="#c58ae0"/>
<circle cx="571.5" cy="110.9" r="1.15" fill="#c58ae0"/>
<circle cx="574.0" cy="112.9" r="1.15" fill="#c58ae0"/>
<circle cx="576.4" cy="113.1" r="1.15" fill="#c58ae0"/>
<circle cx="578.9" cy="112.6" r="1.15" fill="#c58ae0"/>
<circle cx="581.4" cy="111.6" r="1.15" fill="#c58ae0"/>
<circle cx="583.9" cy="112.0" r="1.15" fill="#c58ae0"/>
<circle cx="586.3" cy="111.0" r="1.15" fill="#c58ae0"/>
<circle cx="588.8" cy="107.2" r="1.15" fill="#c58ae0"/>
<circle cx="591.3" cy="108.3" r="1.15" fill="#c58ae0"/>
<circle cx="593.8" cy="108.6" r="1.15" fill="#c58ae0"/>
<circle cx="596.2" cy="104.3" r="1.15" fill="#c58ae0"/>
<circle cx="598.7" cy="105.1" r="1.15" fill="#c58ae0"/>
<circle cx="601.2" cy="108.5" r="1.15" fill="#c58ae0"/>
<circle cx="603.7" cy="108.3" r="1.15" fill="#c58ae0"/>
<circle cx="606.1" cy="108.3" r="1.15" fill="#c58ae0"/>
<circle cx="608.6" cy="109.7" r="1.15" fill="#c58ae0"/>
<circle cx="611.1" cy="111.8" r="1.15" fill="#c58ae0"/>
<circle cx="613.6" cy="113.4" r="1.15" fill="#c58ae0"/>
<circle cx="616.0" cy="112.9" r="1.15" fill="#c58ae0"/>
<circle cx="618.5" cy="110.4" r="1.15" fill="#c58ae0"/>
<circle cx="621.0" cy="107.8" r="1.15" fill="#c58ae0"/>
<circle cx="623.5" cy="108.2" r="1.15" fill="#c58ae0"/>
<circle cx="625.9" cy="111.2" r="1.15" fill="#c58ae0"/>
<circle cx="628.4" cy="112.9" r="1.15" fill="#c58ae0"/>
<circle cx="630.9" cy="113.8" r="1.15" fill="#c58ae0"/>
<circle cx="633.4" cy="112.4" r="1.15" fill="#c58ae0"/>
<circle cx="635.8" cy="111.6" r="1.15" fill="#c58ae0"/>
<circle cx="638.3" cy="116.7" r="1.15" fill="#c58ae0"/>
<circle cx="640.8" cy="118.3" r="1.15" fill="#c58ae0"/>
<circle cx="643.3" cy="113.0" r="1.15" fill="#c58ae0"/>
<circle cx="645.7" cy="109.4" r="1.15" fill="#c58ae0"/>
<circle cx="648.2" cy="113.6" r="1.15" fill="#c58ae0"/>
<circle cx="650.7" cy="113.1" r="1.15" fill="#c58ae0"/>
<circle cx="653.2" cy="104.8" r="1.15" fill="#c58ae0"/>
<circle cx="655.6" cy="105.8" r="1.15" fill="#c58ae0"/>
<circle cx="658.1" cy="109.4" r="1.15" fill="#c58ae0"/>
<circle cx="660.6" cy="113.6" r="1.15" fill="#c58ae0"/>
<circle cx="366.1" cy="149.4" r="1.15" fill="#6a9ff5"/>
<circle cx="368.5" cy="147.0" r="1.15" fill="#6a9ff5"/>
<circle cx="371.0" cy="149.4" r="1.15" fill="#6a9ff5"/>
<circle cx="373.5" cy="151.6" r="1.15" fill="#6a9ff5"/>
<circle cx="376.0" cy="151.6" r="1.15" fill="#6a9ff5"/>
<circle cx="378.4" cy="149.4" r="1.15" fill="#6a9ff5"/>
<circle cx="380.9" cy="149.5" r="1.15" fill="#6a9ff5"/>
<circle cx="383.4" cy="153.5" r="1.15" fill="#6a9ff5"/>
<circle cx="385.9" cy="154.7" r="1.15" fill="#6a9ff5"/>
<circle cx="388.3" cy="153.7" r="1.15" fill="#6a9ff5"/>
<circle cx="390.8" cy="148.8" r="1.15" fill="#6a9ff5"/>
<circle cx="393.3" cy="147.5" r="1.15" fill="#6a9ff5"/>
<circle cx="395.8" cy="150.2" r="1.15" fill="#6a9ff5"/>
<circle cx="398.2" cy="153.5" r="1.15" fill="#6a9ff5"/>
<circle cx="400.7" cy="153.5" r="1.15" fill="#6a9ff5"/>
<circle cx="403.2" cy="153.8" r="1.15" fill="#6a9ff5"/>
<circle cx="405.7" cy="154.0" r="1.15" fill="#6a9ff5"/>
<circle cx="408.1" cy="154.9" r="1.15" fill="#6a9ff5"/>
<circle cx="410.6" cy="154.6" r="1.15" fill="#6a9ff5"/>
<circle cx="413.1" cy="151.3" r="1.15" fill="#6a9ff5"/>
<circle cx="415.6" cy="151.3" r="1.15" fill="#6a9ff5"/>
<circle cx="418.0" cy="152.1" r="1.15" fill="#6a9ff5"/>
<circle cx="420.5" cy="149.7" r="1.15" fill="#6a9ff5"/>
<circle cx="423.0" cy="148.1" r="1.15" fill="#6a9ff5"/>
<circle cx="425.5" cy="150.2" r="1.15" fill="#6a9ff5"/>
<circle cx="427.9" cy="150.0" r="1.15" fill="#6a9ff5"/>
<circle cx="430.4" cy="147.2" r="1.15" fill="#6a9ff5"/>
<circle cx="432.9" cy="147.4" r="1.15" fill="#6a9ff5"/>
<circle cx="435.4" cy="151.1" r="1.15" fill="#6a9ff5"/>
<circle cx="437.8" cy="151.5" r="1.15" fill="#6a9ff5"/>
<circle cx="440.3" cy="149.9" r="1.15" fill="#6a9ff5"/>
<circle cx="442.8" cy="151.2" r="1.15" fill="#6a9ff5"/>
<circle cx="445.3" cy="153.9" r="1.15" fill="#6a9ff5"/>
<circle cx="447.7" cy="155.3" r="1.15" fill="#6a9ff5"/>
<circle cx="450.2" cy="155.3" r="1.15" fill="#6a9ff5"/>
<circle cx="452.7" cy="154.6" r="1.15" fill="#6a9ff5"/>
<circle cx="455.2" cy="152.4" r="1.15" fill="#6a9ff5"/>
<circle cx="457.6" cy="150.7" r="1.15" fill="#6a9ff5"/>
<circle cx="460.1" cy="150.5" r="1.15" fill="#6a9ff5"/>
<circle cx="462.6" cy="154.3" r="1.15" fill="#6a9ff5"/>
<circle cx="465.1" cy="157.8" r="1.15" fill="#6a9ff5"/>
<circle cx="467.5" cy="154.4" r="1.15" fill="#6a9ff5"/>
<circle cx="470.0" cy="149.0" r="1.15" fill="#6a9ff5"/>
<circle cx="472.5" cy="151.3" r="1.15" fill="#6a9ff5"/>
<circle cx="475.0" cy="155.3" r="1.15" fill="#6a9ff5"/>
<circle cx="477.4" cy="155.9" r="1.15" fill="#6a9ff5"/>
<circle cx="479.9" cy="159.0" r="1.15" fill="#6a9ff5"/>
<circle cx="482.4" cy="163.2" r="1.15" fill="#6a9ff5"/>
<circle cx="484.9" cy="164.2" r="1.15" fill="#6a9ff5"/>
<circle cx="487.3" cy="161.4" r="1.15" fill="#6a9ff5"/>
<circle cx="489.8" cy="158.5" r="1.15" fill="#6a9ff5"/>
<circle cx="492.3" cy="158.3" r="1.15" fill="#6a9ff5"/>
<circle cx="494.8" cy="160.8" r="1.15" fill="#6a9ff5"/>
<circle cx="497.2" cy="159.5" r="1.15" fill="#6a9ff5"/>
<circle cx="499.7" cy="152.9" r="1.15" fill="#6a9ff5"/>
<circle cx="502.2" cy="148.4" r="1.15" fill="#6a9ff5"/>
<circle cx="504.7" cy="147.4" r="1.15" fill="#6a9ff5"/>
<circle cx="507.1" cy="145.6" r="1.15" fill="#6a9ff5"/>
<circle cx="509.6" cy="144.3" r="1.15" fill="#6a9ff5"/>
<circle cx="512.1" cy="143.6" r="1.15" fill="#6a9ff5"/>
<circle cx="514.6" cy="143.8" r="1.15" fill="#6a9ff5"/>
<circle cx="517.0" cy="146.9" r="1.15" fill="#6a9ff5"/>
<circle cx="519.5" cy="146.7" r="1.15" fill="#6a9ff5"/>
<circle cx="522.0" cy="145.9" r="1.15" fill="#6a9ff5"/>
<circle cx="524.5" cy="144.1" r="1.15" fill="#6a9ff5"/>
<circle cx="526.9" cy="141.3" r="1.15" fill="#6a9ff5"/>
<circle cx="529.4" cy="144.0" r="1.15" fill="#6a9ff5"/>
<circle cx="531.9" cy="148.8" r="1.15" fill="#6a9ff5"/>
<circle cx="534.4" cy="151.6" r="1.15" fill="#6a9ff5"/>
<circle cx="536.8" cy="151.8" r="1.15" fill="#6a9ff5"/>
<circle cx="539.3" cy="150.4" r="1.15" fill="#6a9ff5"/>
<circle cx="541.8" cy="149.4" r="1.15" fill="#6a9ff5"/>
<circle cx="544.3" cy="149.0" r="1.15" fill="#6a9ff5"/>
<circle cx="546.7" cy="149.2" r="1.15" fill="#6a9ff5"/>
<circle cx="549.2" cy="149.1" r="1.15" fill="#6a9ff5"/>
<circle cx="551.7" cy="151.3" r="1.15" fill="#6a9ff5"/>
<circle cx="554.2" cy="154.6" r="1.15" fill="#6a9ff5"/>
<circle cx="556.6" cy="154.6" r="1.15" fill="#6a9ff5"/>
<circle cx="559.1" cy="151.8" r="1.15" fill="#6a9ff5"/>
<circle cx="561.6" cy="150.5" r="1.15" fill="#6a9ff5"/>
<circle cx="564.1" cy="152.7" r="1.15" fill="#6a9ff5"/>
<circle cx="566.5" cy="152.9" r="1.15" fill="#6a9ff5"/>
<circle cx="569.0" cy="151.0" r="1.15" fill="#6a9ff5"/>
<circle cx="571.5" cy="150.7" r="1.15" fill="#6a9ff5"/>
<circle cx="574.0" cy="151.8" r="1.15" fill="#6a9ff5"/>
<circle cx="576.4" cy="153.0" r="1.15" fill="#6a9ff5"/>
<circle cx="578.9" cy="153.9" r="1.15" fill="#6a9ff5"/>
<circle cx="581.4" cy="153.2" r="1.15" fill="#6a9ff5"/>
<circle cx="583.9" cy="151.2" r="1.15" fill="#6a9ff5"/>
<circle cx="586.3" cy="150.7" r="1.15" fill="#6a9ff5"/>
<circle cx="588.8" cy="150.6" r="1.15" fill="#6a9ff5"/>
<circle cx="591.3" cy="151.6" r="1.15" fill="#6a9ff5"/>
<circle cx="593.8" cy="151.9" r="1.15" fill="#6a9ff5"/>
<circle cx="596.2" cy="148.4" r="1.15" fill="#6a9ff5"/>
<circle cx="598.7" cy="147.3" r="1.15" fill="#6a9ff5"/>
<circle cx="601.2" cy="148.9" r="1.15" fill="#6a9ff5"/>
<circle cx="603.7" cy="149.5" r="1.15" fill="#6a9ff5"/>
<circle cx="606.1" cy="150.4" r="1.15" fill="#6a9ff5"/>
<circle cx="608.6" cy="150.1" r="1.15" fill="#6a9ff5"/>
<circle cx="611.1" cy="151.7" r="1.15" fill="#6a9ff5"/>
<circle cx="613.6" cy="154.4" r="1.15" fill="#6a9ff5"/>
<circle cx="616.0" cy="153.7" r="1.15" fill="#6a9ff5"/>
<circle cx="618.5" cy="151.2" r="1.15" fill="#6a9ff5"/>
<circle cx="621.0" cy="149.9" r="1.15" fill="#6a9ff5"/>
<circle cx="623.5" cy="150.4" r="1.15" fill="#6a9ff5"/>
<circle cx="625.9" cy="151.7" r="1.15" fill="#6a9ff5"/>
<circle cx="628.4" cy="153.3" r="1.15" fill="#6a9ff5"/>
<circle cx="630.9" cy="152.4" r="1.15" fill="#6a9ff5"/>
<circle cx="633.4" cy="151.7" r="1.15" fill="#6a9ff5"/>
<circle cx="635.8" cy="152.4" r="1.15" fill="#6a9ff5"/>
<circle cx="638.3" cy="153.6" r="1.15" fill="#6a9ff5"/>
<circle cx="640.8" cy="154.7" r="1.15" fill="#6a9ff5"/>
<circle cx="643.3" cy="152.9" r="1.15" fill="#6a9ff5"/>
<circle cx="645.7" cy="151.5" r="1.15" fill="#6a9ff5"/>
<circle cx="648.2" cy="154.0" r="1.15" fill="#6a9ff5"/>
<circle cx="650.7" cy="153.8" r="1.15" fill="#6a9ff5"/>
<circle cx="653.2" cy="150.7" r="1.15" fill="#6a9ff5"/>
<circle cx="655.6" cy="150.2" r="1.15" fill="#6a9ff5"/>
<circle cx="658.1" cy="152.6" r="1.15" fill="#6a9ff5"/>
<circle cx="660.6" cy="155.3" r="1.15" fill="#6a9ff5"/>
<rect x="357.8" y="203.2" width="8.6" height="2.4" rx="1.2" fill="#6a9ff5"/>
<text x="374.9" y="206.6" font-size="7.8" fill="#ccccdc" stroke="#ccccdc" stroke-width="0.14" text-anchor="start" font-weight="normal" >logins</text>
<rect x="405" y="203.2" width="8.6" height="2.4" rx="1.2" fill="#c58ae0"/>
<text x="422.0" y="206.6" font-size="7.8" fill="#ccccdc" stroke="#ccccdc" stroke-width="0.14" text-anchor="start" font-weight="normal" >logins (-1 hour)</text>
<rect x="683.5" y="58.5" width="162" height="87" rx="2" fill="#181b1f" stroke="rgba(204,204,220,0.045)" stroke-width="1"/>
<text x="688.4" y="71.8" font-size="9.2" fill="#ccccdc" stroke="#ccccdc" stroke-width="0.32" text-anchor="start" font-weight="normal" >Memory</text>
<path d="M734.54,135.23 A31.5,31.5 0 1 1 794.46,135.23" fill="none" stroke="#25262b" stroke-width="11.0"/>
<path d="M734.54,135.23 A31.5,31.5 0 0 1 751.44,96.84" fill="none" stroke="#62ac56" stroke-width="11.0"/>
<path d="M727.03,137.68 A39.4,39.4 0 0 1 787.10,93.23" fill="none" stroke="#62ac56" stroke-width="1.5"/>
<path d="M787.10,93.23 A39.4,39.4 0 0 1 803.78,122.41" fill="none" stroke="#e8832e" stroke-width="1.5"/>
<path d="M803.78,122.41 A39.4,39.4 0 0 1 801.97,137.68" fill="none" stroke="#e0302c" stroke-width="1.5"/>
<text x="764.2" y="133.8" font-size="13.6" fill="#67b55c" stroke="#67b55c" stroke-width="0.32" text-anchor="middle" font-weight="normal" textLength="34" lengthAdjust="spacingAndGlyphs">114 B</text>
<rect x="851.5" y="58.5" width="162" height="87" rx="2" fill="#181b1f" stroke="rgba(204,204,220,0.045)" stroke-width="1"/>
<text x="856.5" y="71.8" font-size="9.2" fill="#ccccdc" stroke="#ccccdc" stroke-width="0.32" text-anchor="start" font-weight="normal" >Google hits</text>
<path d="M904.21,132.79 A29.75,29.75 0 1 1 960.79,132.79" fill="none" stroke="#25262b" stroke-width="10.5"/>
<path d="M904.21,132.79 A29.75,29.75 0 0 1 905.43,111.26" fill="none" stroke="#62ac56" stroke-width="10.5"/>
<path d="M896.93,135.16 A37.4,37.4 0 0 1 953.95,92.96" fill="none" stroke="#62ac56" stroke-width="1.5"/>
<path d="M953.95,92.96 A37.4,37.4 0 0 1 969.78,120.67" fill="none" stroke="#e8832e" stroke-width="1.5"/>
<path d="M969.78,120.67 A37.4,37.4 0 0 1 968.07,135.16" fill="none" stroke="#e0302c" stroke-width="1.5"/>
<text x="932.2" y="134.8" font-size="17" fill="#67b55c" stroke="#67b55c" stroke-width="0.32" text-anchor="middle" font-weight="normal" textLength="28" lengthAdjust="spacingAndGlyphs">57.1</text>
<rect x="683.5" y="151.5" width="162" height="63" rx="2" fill="#181b1f" stroke="rgba(204,204,220,0.045)" stroke-width="1"/>
<text x="688.3" y="165.0" font-size="9.2" fill="#ccccdc" stroke="#ccccdc" stroke-width="0.32" text-anchor="start" font-weight="normal" textLength="54.3" lengthAdjust="spacingAndGlyphs">Support calls</text>
<polygon points="683.7,214.5 683.7,199.8 685.0,199.2 686.3,200.3 687.6,200.1 688.9,201.8 690.2,203.0 691.5,202.8 692.8,199.3 694.1,196.1 695.4,197.4 696.7,202.1 698.0,200.5 699.3,199.3 700.6,201.4 701.9,202.0 703.2,200.6 704.5,200.7 705.8,200.0 707.1,199.4 708.4,200.6 709.7,202.6 711.0,203.0 712.3,201.0 713.6,201.1 714.9,199.3 716.2,197.9 717.5,201.3 718.8,203.2 720.1,205.9 721.4,203.8 722.7,200.6 724.0,200.2 725.3,202.5 726.6,204.7 727.9,205.7 729.2,203.1 730.5,201.3 731.8,202.3 733.1,205.7 734.4,205.5 735.7,203.4 737.0,201.3 738.3,200.7 739.6,199.0 740.9,200.0 742.2,199.6 743.5,199.8 744.8,199.7 746.1,198.6 747.4,199.7 748.7,199.7 750.0,200.0 751.3,202.7 752.6,202.2 753.9,201.4 755.2,200.6 756.5,200.6 757.8,201.2 759.1,202.1 760.4,200.9 761.7,200.0 763.0,197.5 764.3,199.0 765.6,199.2 766.9,200.0 768.2,200.9 769.5,200.1 770.8,200.0 772.1,200.8 773.4,201.5 774.7,201.1 776.0,201.2 777.3,199.7 778.6,198.4 779.9,197.8 781.2,198.0 782.5,198.8 783.8,199.3 785.1,201.1 786.4,201.9 787.7,203.5 789.0,205.4 790.3,206.1 791.6,208.5 792.9,206.6 794.2,203.7 795.5,200.1 796.8,202.3 798.1,204.6 799.4,203.2 800.7,202.8 802.0,205.8 803.3,210.9 804.6,214.6 805.9,206.6 807.2,197.1 808.5,194.3 809.8,195.0 811.1,194.9 812.4,197.2 813.7,198.4 815.0,198.4 816.3,201.6 817.6,202.6 818.9,200.4 820.2,200.7 821.5,202.1 822.8,202.5 824.1,203.0 825.4,203.1 826.7,202.8 828.0,202.6 829.3,202.6 830.6,203.2 831.9,201.3 833.2,201.3 834.5,200.4 835.8,203.3 837.1,206.8 838.4,205.7 839.7,204.0 841.0,201.6 842.3,203.8 843.6,204.1 844.3,204.0 844.3,214.5" fill="rgba(224,48,44,0.21)"/>
<polyline points="683.7,199.8 685.0,199.2 686.3,200.3 687.6,200.1 688.9,201.8 690.2,203.0 691.5,202.8 692.8,199.3 694.1,196.1 695.4,197.4 696.7,202.1 698.0,200.5 699.3,199.3 700.6,201.4 701.9,202.0 703.2,200.6 704.5,200.7 705.8,200.0 707.1,199.4 708.4,200.6 709.7,202.6 711.0,203.0 712.3,201.0 713.6,201.1 714.9,199.3 716.2,197.9 717.5,201.3 718.8,203.2 720.1,205.9 721.4,203.8 722.7,200.6 724.0,200.2 725.3,202.5 726.6,204.7 727.9,205.7 729.2,203.1 730.5,201.3 731.8,202.3 733.1,205.7 734.4,205.5 735.7,203.4 737.0,201.3 738.3,200.7 739.6,199.0 740.9,200.0 742.2,199.6 743.5,199.8 744.8,199.7 746.1,198.6 747.4,199.7 748.7,199.7 750.0,200.0 751.3,202.7 752.6,202.2 753.9,201.4 755.2,200.6 756.5,200.6 757.8,201.2 759.1,202.1 760.4,200.9 761.7,200.0 763.0,197.5 764.3,199.0 765.6,199.2 766.9,200.0 768.2,200.9 769.5,200.1 770.8,200.0 772.1,200.8 773.4,201.5 774.7,201.1 776.0,201.2 777.3,199.7 778.6,198.4 779.9,197.8 781.2,198.0 782.5,198.8 783.8,199.3 785.1,201.1 786.4,201.9 787.7,203.5 789.0,205.4 790.3,206.1 791.6,208.5 792.9,206.6 794.2,203.7 795.5,200.1 796.8,202.3 798.1,204.6 799.4,203.2 800.7,202.8 802.0,205.8 803.3,210.9 804.6,214.6 805.9,206.6 807.2,197.1 808.5,194.3 809.8,195.0 811.1,194.9 812.4,197.2 813.7,198.4 815.0,198.4 816.3,201.6 817.6,202.6 818.9,200.4 820.2,200.7 821.5,202.1 822.8,202.5 824.1,203.0 825.4,203.1 826.7,202.8 828.0,202.6 829.3,202.6 830.6,203.2 831.9,201.3 833.2,201.3 834.5,200.4 835.8,203.3 837.1,206.8 838.4,205.7 839.7,204.0 841.0,201.6 842.3,203.8 843.6,204.1 844.3,204.0" fill="none" stroke="#e0302c" stroke-width="1" stroke-linejoin="round"/>
<text x="764.3" y="198.2" font-size="14" fill="#e8403f" stroke="#e8403f" stroke-width="0.32" text-anchor="middle" font-weight="normal" textLength="30.7" lengthAdjust="spacingAndGlyphs">84.9</text>
<rect x="851.5" y="151.5" width="162" height="63" rx="2" fill="#181b1f" stroke="rgba(204,204,220,0.045)" stroke-width="1"/>
<text x="856.6" y="165.0" font-size="9.2" fill="#ccccdc" stroke="#ccccdc" stroke-width="0.32" text-anchor="start" font-weight="normal" >Sign ups</text>
<polygon points="851.7,214.5 851.7,208.1 853.0,205.0 854.3,203.8 855.6,202.0 856.9,204.0 858.2,203.7 859.5,204.0 860.8,202.9 862.1,201.9 863.4,200.5 864.7,200.1 866.0,200.4 867.3,201.2 868.6,199.7 869.9,202.1 871.2,203.7 872.5,206.4 873.8,207.3 875.1,205.2 876.4,202.9 877.7,204.3 879.0,205.2 880.3,205.3 881.6,202.4 882.9,202.2 884.2,199.1 885.5,202.1 886.8,204.1 888.1,204.1 889.4,203.9 890.7,204.1 892.0,203.4 893.3,204.2 894.6,206.0 895.9,206.6 897.2,204.3 898.5,201.6 899.8,203.5 901.1,206.6 902.4,205.2 903.7,203.4 905.0,202.5 906.3,199.8 907.6,198.4 908.9,199.7 910.2,202.6 911.5,201.1 912.8,200.2 914.1,200.1 915.4,201.7 916.7,202.7 918.0,204.7 919.3,205.6 920.6,205.0 921.9,202.1 923.2,203.7 924.5,203.3 925.8,203.7 927.1,204.5 928.4,203.3 929.7,203.2 931.0,203.1 932.3,203.4 933.6,202.0 934.9,202.6 936.2,202.0 937.5,200.9 938.8,199.4 940.1,198.3 941.4,199.9 942.7,202.4 944.0,201.7 945.3,202.2 946.6,201.3 947.9,201.6 949.2,202.0 950.5,202.9 951.8,202.5 953.1,202.2 954.4,202.8 955.7,204.1 957.0,204.1 958.3,204.1 959.6,204.0 960.9,207.1 962.2,205.3 963.5,204.9 964.8,204.3 966.1,204.4 967.4,204.8 968.7,206.9 970.0,208.4 971.3,212.4 972.6,212.4 973.9,212.2 975.2,207.7 976.5,201.9 977.8,195.5 979.1,194.5 980.4,195.5 981.7,197.7 983.0,198.1 984.3,201.7 985.6,204.9 986.9,205.0 988.2,204.9 989.5,204.1 990.8,204.1 992.1,203.4 993.4,204.2 994.7,204.9 996.0,205.9 997.3,207.0 998.6,205.4 999.9,204.3 1001.2,204.5 1002.5,201.8 1003.8,203.7 1005.1,207.1 1006.4,206.1 1007.7,206.3 1009.0,205.2 1010.3,204.3 1011.6,204.1 1012.3,203.5 1012.3,214.5" fill="rgba(55,176,58,0.19)"/>
<polyline points="851.7,208.1 853.0,205.0 854.3,203.8 855.6,202.0 856.9,204.0 858.2,203.7 859.5,204.0 860.8,202.9 862.1,201.9 863.4,200.5 864.7,200.1 866.0,200.4 867.3,201.2 868.6,199.7 869.9,202.1 871.2,203.7 872.5,206.4 873.8,207.3 875.1,205.2 876.4,202.9 877.7,204.3 879.0,205.2 880.3,205.3 881.6,202.4 882.9,202.2 884.2,199.1 885.5,202.1 886.8,204.1 888.1,204.1 889.4,203.9 890.7,204.1 892.0,203.4 893.3,204.2 894.6,206.0 895.9,206.6 897.2,204.3 898.5,201.6 899.8,203.5 901.1,206.6 902.4,205.2 903.7,203.4 905.0,202.5 906.3,199.8 907.6,198.4 908.9,199.7 910.2,202.6 911.5,201.1 912.8,200.2 914.1,200.1 915.4,201.7 916.7,202.7 918.0,204.7 919.3,205.6 920.6,205.0 921.9,202.1 923.2,203.7 924.5,203.3 925.8,203.7 927.1,204.5 928.4,203.3 929.7,203.2 931.0,203.1 932.3,203.4 933.6,202.0 934.9,202.6 936.2,202.0 937.5,200.9 938.8,199.4 940.1,198.3 941.4,199.9 942.7,202.4 944.0,201.7 945.3,202.2 946.6,201.3 947.9,201.6 949.2,202.0 950.5,202.9 951.8,202.5 953.1,202.2 954.4,202.8 955.7,204.1 957.0,204.1 958.3,204.1 959.6,204.0 960.9,207.1 962.2,205.3 963.5,204.9 964.8,204.3 966.1,204.4 967.4,204.8 968.7,206.9 970.0,208.4 971.3,212.4 972.6,212.4 973.9,212.2 975.2,207.7 976.5,201.9 977.8,195.5 979.1,194.5 980.4,195.5 981.7,197.7 983.0,198.1 984.3,201.7 985.6,204.9 986.9,205.0 988.2,204.9 989.5,204.1 990.8,204.1 992.1,203.4 993.4,204.2 994.7,204.9 996.0,205.9 997.3,207.0 998.6,205.4 999.9,204.3 1001.2,204.5 1002.5,201.8 1003.8,203.7 1005.1,207.1 1006.4,206.1 1007.7,206.3 1009.0,205.2 1010.3,204.3 1011.6,204.1 1012.3,203.5" fill="none" stroke="#37b03a" stroke-width="1" stroke-linejoin="round"/>
<text x="932.6" y="198.4" font-size="14" fill="#3cb83c" stroke="#3cb83c" stroke-width="0.32" text-anchor="middle" font-weight="normal" textLength="25.9" lengthAdjust="spacingAndGlyphs">283</text>
<rect x="10.5" y="220.5" width="667" height="179" rx="2" fill="#181b1f" stroke="rgba(204,204,220,0.045)" stroke-width="1"/>
<text x="344.0" y="233.8" font-size="9.2" fill="#ccccdc" stroke="#ccccdc" stroke-width="0.32" text-anchor="middle" font-weight="normal" >server requests</text>
<polygon points="32.5,363.9 32.5,278.3 35.0,275.6 37.5,276.1 40.0,276.3 42.5,278.0 45.0,279.4 47.5,279.9 50.0,280.3 52.5,277.1 55.0,279.1 57.6,280.1 60.1,284.1 62.6,280.0 65.1,278.2 67.6,279.5 70.1,278.4 72.6,277.1 75.1,272.4 77.6,273.9 80.1,278.3 82.6,282.3 85.1,283.3 87.6,283.7 90.1,282.8 92.6,284.3 95.1,283.8 97.6,282.1 100.1,280.9 102.6,275.5 105.2,274.7 107.7,273.6 110.2,277.1 112.7,273.0 115.2,265.8 117.7,274.9 120.2,276.1 122.7,272.7 125.2,269.4 127.7,270.5 130.2,274.8 132.7,278.8 135.2,280.9 137.7,282.5 140.2,279.4 142.7,279.4 145.2,274.5 147.7,276.3 150.2,272.7 152.7,272.7 155.3,275.2 157.8,280.6 160.3,280.1 162.8,277.6 165.3,272.9 167.8,275.6 170.3,278.5 172.8,279.9 175.3,277.7 177.8,274.7 180.3,278.4 182.8,281.9 185.3,278.7 187.8,273.8 190.3,275.1 192.8,280.2 195.3,284.6 197.8,284.4 200.3,280.0 202.9,280.6 205.4,276.8 207.9,278.9 210.4,278.5 212.9,278.7 215.4,281.5 217.9,278.5 220.4,282.3 222.9,280.8 225.4,283.2 227.9,282.7 230.4,278.0 232.9,274.2 235.4,273.6 237.9,274.4 240.4,278.5 242.9,278.0 245.4,278.5 247.9,276.2 250.5,278.4 253.0,276.7 255.5,278.2 258.0,277.1 260.5,279.1 263.0,279.6 265.5,279.2 268.0,282.0 270.5,283.3 273.0,281.8 275.5,281.5 278.0,277.9 280.5,279.4 283.0,278.3 285.5,275.8 288.0,275.6 290.5,276.0 293.0,276.2 295.5,277.1 298.0,277.9 300.6,278.7 303.1,275.7 305.6,276.2 308.1,280.1 310.6,280.3 313.1,275.8 315.6,275.8 318.1,274.7 320.6,275.3 323.1,272.3 325.6,275.4 328.1,279.5 330.6,283.1 333.1,280.6 335.6,280.5 338.1,276.1 340.6,279.0 343.1,275.8 345.6,276.8 348.2,278.7 350.7,282.1 353.2,281.0 355.7,281.9 358.2,282.1 360.7,283.0 363.2,278.3 365.7,276.2 368.2,278.9 370.7,278.1 373.2,280.0 375.7,281.8 378.2,285.9 380.7,283.7 383.2,282.7 385.7,282.8 388.2,283.8 390.7,280.1 393.2,280.5 395.8,280.5 398.3,279.1 400.8,273.6 403.3,271.6 405.8,272.5 408.3,274.5 410.8,277.0 413.3,280.9 415.8,284.9 418.3,279.5 420.8,275.9 423.3,270.8 425.8,276.7 428.3,276.6 430.8,279.8 433.3,275.1 435.8,278.2 438.3,274.8 440.8,279.2 443.3,277.6 445.9,279.5 448.4,274.8 450.9,273.6 453.4,273.2 455.9,273.7 458.4,272.8 460.9,276.0 463.4,276.4 465.9,276.1 468.4,272.7 470.9,274.1 473.4,274.7 475.9,275.6 478.4,274.4 480.9,276.2 483.4,278.2 485.9,278.3 488.4,278.9 490.9,281.5 493.5,280.4 496.0,277.8 498.5,272.3 501.0,272.4 503.5,275.6 506.0,276.5 508.5,277.1 511.0,277.2 513.5,276.5 516.0,279.7 518.5,276.9 521.0,281.3 523.5,278.7 526.0,279.7 528.5,278.2 531.0,281.4 533.5,288.4 536.0,293.7 538.5,290.7 541.1,286.3 543.6,280.5 546.1,279.2 548.6,273.7 551.1,269.4 553.6,270.3 556.1,268.4 558.6,266.6 561.1,265.3 563.6,265.5 566.1,265.7 568.6,263.1 571.1,267.1 573.6,273.2 576.1,276.6 578.6,269.3 581.1,267.1 583.6,272.4 586.1,275.5 588.6,278.8 591.2,279.2 593.7,279.5 596.2,276.9 598.7,273.7 601.2,271.9 603.7,271.2 606.2,273.9 608.7,277.6 611.2,279.2 613.7,278.5 616.2,277.9 618.7,279.6 621.2,278.1 623.7,276.9 626.2,276.2 628.7,275.0 631.2,272.7 633.7,273.4 636.2,277.9 638.8,283.2 641.3,281.1 643.8,282.4 646.3,278.6 648.8,280.0 651.3,278.0 653.8,277.4 656.3,280.9 658.8,282.0 661.3,286.4 661.3,363.9" fill="#15365a"/>
<polyline points="32.5,278.3 35.0,275.6 37.5,276.1 40.0,276.3 42.5,278.0 45.0,279.4 47.5,279.9 50.0,280.3 52.5,277.1 55.0,279.1 57.6,280.1 60.1,284.1 62.6,280.0 65.1,278.2 67.6,279.5 70.1,278.4 72.6,277.1 75.1,272.4 77.6,273.9 80.1,278.3 82.6,282.3 85.1,283.3 87.6,283.7 90.1,282.8 92.6,284.3 95.1,283.8 97.6,282.1 100.1,280.9 102.6,275.5 105.2,274.7 107.7,273.6 110.2,277.1 112.7,273.0 115.2,265.8 117.7,274.9 120.2,276.1 122.7,272.7 125.2,269.4 127.7,270.5 130.2,274.8 132.7,278.8 135.2,280.9 137.7,282.5 140.2,279.4 142.7,279.4 145.2,274.5 147.7,276.3 150.2,272.7 152.7,272.7 155.3,275.2 157.8,280.6 160.3,280.1 162.8,277.6 165.3,272.9 167.8,275.6 170.3,278.5 172.8,279.9 175.3,277.7 177.8,274.7 180.3,278.4 182.8,281.9 185.3,278.7 187.8,273.8 190.3,275.1 192.8,280.2 195.3,284.6 197.8,284.4 200.3,280.0 202.9,280.6 205.4,276.8 207.9,278.9 210.4,278.5 212.9,278.7 215.4,281.5 217.9,278.5 220.4,282.3 222.9,280.8 225.4,283.2 227.9,282.7 230.4,278.0 232.9,274.2 235.4,273.6 237.9,274.4 240.4,278.5 242.9,278.0 245.4,278.5 247.9,276.2 250.5,278.4 253.0,276.7 255.5,278.2 258.0,277.1 260.5,279.1 263.0,279.6 265.5,279.2 268.0,282.0 270.5,283.3 273.0,281.8 275.5,281.5 278.0,277.9 280.5,279.4 283.0,278.3 285.5,275.8 288.0,275.6 290.5,276.0 293.0,276.2 295.5,277.1 298.0,277.9 300.6,278.7 303.1,275.7 305.6,276.2 308.1,280.1 310.6,280.3 313.1,275.8 315.6,275.8 318.1,274.7 320.6,275.3 323.1,272.3 325.6,275.4 328.1,279.5 330.6,283.1 333.1,280.6 335.6,280.5 338.1,276.1 340.6,279.0 343.1,275.8 345.6,276.8 348.2,278.7 350.7,282.1 353.2,281.0 355.7,281.9 358.2,282.1 360.7,283.0 363.2,278.3 365.7,276.2 368.2,278.9 370.7,278.1 373.2,280.0 375.7,281.8 378.2,285.9 380.7,283.7 383.2,282.7 385.7,282.8 388.2,283.8 390.7,280.1 393.2,280.5 395.8,280.5 398.3,279.1 400.8,273.6 403.3,271.6 405.8,272.5 408.3,274.5 410.8,277.0 413.3,280.9 415.8,284.9 418.3,279.5 420.8,275.9 423.3,270.8 425.8,276.7 428.3,276.6 430.8,279.8 433.3,275.1 435.8,278.2 438.3,274.8 440.8,279.2 443.3,277.6 445.9,279.5 448.4,274.8 450.9,273.6 453.4,273.2 455.9,273.7 458.4,272.8 460.9,276.0 463.4,276.4 465.9,276.1 468.4,272.7 470.9,274.1 473.4,274.7 475.9,275.6 478.4,274.4 480.9,276.2 483.4,278.2 485.9,278.3 488.4,278.9 490.9,281.5 493.5,280.4 496.0,277.8 498.5,272.3 501.0,272.4 503.5,275.6 506.0,276.5 508.5,277.1 511.0,277.2 513.5,276.5 516.0,279.7 518.5,276.9 521.0,281.3 523.5,278.7 526.0,279.7 528.5,278.2 531.0,281.4 533.5,288.4 536.0,293.7 538.5,290.7 541.1,286.3 543.6,280.5 546.1,279.2 548.6,273.7 551.1,269.4 553.6,270.3 556.1,268.4 558.6,266.6 561.1,265.3 563.6,265.5 566.1,265.7 568.6,263.1 571.1,267.1 573.6,273.2 576.1,276.6 578.6,269.3 581.1,267.1 583.6,272.4 586.1,275.5 588.6,278.8 591.2,279.2 593.7,279.5 596.2,276.9 598.7,273.7 601.2,271.9 603.7,271.2 606.2,273.9 608.7,277.6 611.2,279.2 613.7,278.5 616.2,277.9 618.7,279.6 621.2,278.1 623.7,276.9 626.2,276.2 628.7,275.0 631.2,272.7 633.7,273.4 636.2,277.9 638.8,283.2 641.3,281.1 643.8,282.4 646.3,278.6 648.8,280.0 651.3,278.0 653.8,277.4 656.3,280.9 658.8,282.0 661.3,286.4" fill="none" stroke="#1c4a7c" stroke-width="0.9"/>
<polygon points="32.5,363.9 32.5,300.7 35.0,298.4 37.5,298.2 40.0,298.8 42.5,300.2 45.0,301.4 47.5,301.3 50.0,301.5 52.5,298.9 55.0,300.9 57.6,302.3 60.1,305.9 62.6,302.5 65.1,300.6 67.6,301.3 70.1,301.1 72.6,300.1 75.1,296.6 77.6,297.5 80.1,301.6 82.6,304.1 85.1,304.6 87.6,304.5 90.1,303.9 92.6,305.5 95.1,305.0 97.6,304.3 100.1,303.0 102.6,298.2 105.2,297.1 107.7,296.0 110.2,299.2 112.7,295.0 115.2,287.9 117.7,296.7 120.2,298.4 122.7,295.5 125.2,293.3 127.7,294.0 130.2,297.8 132.7,300.8 135.2,303.1 137.7,304.4 140.2,301.8 142.7,301.4 145.2,297.0 147.7,298.9 150.2,296.2 152.7,296.2 155.3,298.5 157.8,302.8 160.3,302.3 162.8,299.8 165.3,295.9 167.8,297.7 170.3,299.9 172.8,301.3 175.3,300.1 177.8,298.0 180.3,301.4 182.8,304.1 185.3,301.5 187.8,297.3 190.3,298.2 192.8,302.5 195.3,305.9 197.8,306.5 200.3,302.9 202.9,303.2 205.4,299.6 207.9,300.6 210.4,300.3 212.9,300.5 215.4,302.9 217.9,300.4 220.4,303.5 222.9,302.7 225.4,304.6 227.9,304.1 230.4,299.9 232.9,297.0 235.4,296.4 237.9,297.4 240.4,300.6 242.9,300.0 245.4,300.2 247.9,298.6 250.5,300.5 253.0,299.2 255.5,300.5 258.0,300.0 260.5,302.0 263.0,301.8 265.5,301.3 268.0,303.0 270.5,304.1 273.0,302.9 275.5,302.5 278.0,299.9 280.5,301.3 283.0,300.9 285.5,298.6 288.0,298.1 290.5,298.2 293.0,298.3 295.5,299.6 298.0,300.4 300.6,301.2 303.1,298.6 305.6,298.9 308.1,302.3 310.6,302.3 313.1,299.4 315.6,299.2 318.1,298.2 320.6,298.8 323.1,296.6 325.6,299.2 328.1,302.2 330.6,304.8 333.1,302.6 335.6,302.2 338.1,299.0 340.6,301.6 343.1,299.1 345.6,300.1 348.2,301.2 350.7,303.6 353.2,302.2 355.7,303.1 358.2,303.6 360.7,304.8 363.2,300.8 365.7,298.9 368.2,300.5 370.7,300.3 373.2,301.8 375.7,303.2 378.2,306.4 380.7,304.6 383.2,303.9 385.7,303.9 388.2,305.1 390.7,302.3 393.2,302.8 395.8,302.7 398.3,301.9 400.8,297.7 403.3,295.9 405.8,296.1 408.3,297.6 410.8,299.6 413.3,303.1 415.8,306.3 418.3,302.3 420.8,299.6 423.3,295.6 425.8,300.0 428.3,299.5 430.8,301.8 433.3,298.2 435.8,300.7 438.3,297.7 440.8,301.5 443.3,300.3 445.9,301.9 448.4,297.5 450.9,296.3 453.4,295.8 455.9,296.5 458.4,295.5 460.9,298.2 463.4,298.1 465.9,297.8 468.4,295.6 470.9,296.8 473.4,297.6 475.9,298.5 478.4,297.8 480.9,299.0 483.4,300.7 485.9,301.2 488.4,301.7 490.9,303.3 493.5,302.0 496.0,300.4 498.5,296.0 501.0,296.3 503.5,298.4 506.0,299.5 508.5,299.5 511.0,299.7 513.5,299.1 516.0,302.4 518.5,300.5 521.0,303.8 523.5,301.4 526.0,302.0 528.5,300.8 531.0,302.8 533.5,308.1 536.0,311.5 538.5,308.9 541.1,306.0 543.6,302.1 546.1,301.4 548.6,296.3 551.1,293.0 553.6,294.6 556.1,293.8 558.6,292.0 561.1,290.9 563.6,290.5 566.1,290.9 568.6,288.2 571.1,292.0 573.6,297.4 576.1,300.5 578.6,296.1 581.1,293.4 583.6,295.9 586.1,297.5 588.6,300.8 591.2,301.9 593.7,302.0 596.2,299.5 598.7,296.3 601.2,295.1 603.7,294.6 606.2,297.1 608.7,300.0 611.2,301.3 613.7,301.1 616.2,300.5 618.7,301.7 621.2,300.3 623.7,299.8 626.2,299.6 628.7,298.4 631.2,296.6 633.7,296.9 636.2,301.0 638.8,304.7 641.3,302.7 643.8,303.2 646.3,300.9 648.8,302.0 651.3,300.7 653.8,299.3 656.3,302.3 658.8,302.8 661.3,306.5 661.3,363.9" fill="#20598a"/>
<polyline points="32.5,300.7 35.0,298.4 37.5,298.2 40.0,298.8 42.5,300.2 45.0,301.4 47.5,301.3 50.0,301.5 52.5,298.9 55.0,300.9 57.6,302.3 60.1,305.9 62.6,302.5 65.1,300.6 67.6,301.3 70.1,301.1 72.6,300.1 75.1,296.6 77.6,297.5 80.1,301.6 82.6,304.1 85.1,304.6 87.6,304.5 90.1,303.9 92.6,305.5 95.1,305.0 97.6,304.3 100.1,303.0 102.6,298.2 105.2,297.1 107.7,296.0 110.2,299.2 112.7,295.0 115.2,287.9 117.7,296.7 120.2,298.4 122.7,295.5 125.2,293.3 127.7,294.0 130.2,297.8 132.7,300.8 135.2,303.1 137.7,304.4 140.2,301.8 142.7,301.4 145.2,297.0 147.7,298.9 150.2,296.2 152.7,296.2 155.3,298.5 157.8,302.8 160.3,302.3 162.8,299.8 165.3,295.9 167.8,297.7 170.3,299.9 172.8,301.3 175.3,300.1 177.8,298.0 180.3,301.4 182.8,304.1 185.3,301.5 187.8,297.3 190.3,298.2 192.8,302.5 195.3,305.9 197.8,306.5 200.3,302.9 202.9,303.2 205.4,299.6 207.9,300.6 210.4,300.3 212.9,300.5 215.4,302.9 217.9,300.4 220.4,303.5 222.9,302.7 225.4,304.6 227.9,304.1 230.4,299.9 232.9,297.0 235.4,296.4 237.9,297.4 240.4,300.6 242.9,300.0 245.4,300.2 247.9,298.6 250.5,300.5 253.0,299.2 255.5,300.5 258.0,300.0 260.5,302.0 263.0,301.8 265.5,301.3 268.0,303.0 270.5,304.1 273.0,302.9 275.5,302.5 278.0,299.9 280.5,301.3 283.0,300.9 285.5,298.6 288.0,298.1 290.5,298.2 293.0,298.3 295.5,299.6 298.0,300.4 300.6,301.2 303.1,298.6 305.6,298.9 308.1,302.3 310.6,302.3 313.1,299.4 315.6,299.2 318.1,298.2 320.6,298.8 323.1,296.6 325.6,299.2 328.1,302.2 330.6,304.8 333.1,302.6 335.6,302.2 338.1,299.0 340.6,301.6 343.1,299.1 345.6,300.1 348.2,301.2 350.7,303.6 353.2,302.2 355.7,303.1 358.2,303.6 360.7,304.8 363.2,300.8 365.7,298.9 368.2,300.5 370.7,300.3 373.2,301.8 375.7,303.2 378.2,306.4 380.7,304.6 383.2,303.9 385.7,303.9 388.2,305.1 390.7,302.3 393.2,302.8 395.8,302.7 398.3,301.9 400.8,297.7 403.3,295.9 405.8,296.1 408.3,297.6 410.8,299.6 413.3,303.1 415.8,306.3 418.3,302.3 420.8,299.6 423.3,295.6 425.8,300.0 428.3,299.5 430.8,301.8 433.3,298.2 435.8,300.7 438.3,297.7 440.8,301.5 443.3,300.3 445.9,301.9 448.4,297.5 450.9,296.3 453.4,295.8 455.9,296.5 458.4,295.5 460.9,298.2 463.4,298.1 465.9,297.8 468.4,295.6 470.9,296.8 473.4,297.6 475.9,298.5 478.4,297.8 480.9,299.0 483.4,300.7 485.9,301.2 488.4,301.7 490.9,303.3 493.5,302.0 496.0,300.4 498.5,296.0 501.0,296.3 503.5,298.4 506.0,299.5 508.5,299.5 511.0,299.7 513.5,299.1 516.0,302.4 518.5,300.5 521.0,303.8 523.5,301.4 526.0,302.0 528.5,300.8 531.0,302.8 533.5,308.1 536.0,311.5 538.5,308.9 541.1,306.0 543.6,302.1 546.1,301.4 548.6,296.3 551.1,293.0 553.6,294.6 556.1,293.8 558.6,292.0 561.1,290.9 563.6,290.5 566.1,290.9 568.6,288.2 571.1,292.0 573.6,297.4 576.1,300.5 578.6,296.1 581.1,293.4 583.6,295.9 586.1,297.5 588.6,300.8 591.2,301.9 593.7,302.0 596.2,299.5 598.7,296.3 601.2,295.1 603.7,294.6 606.2,297.1 608.7,300.0 611.2,301.3 613.7,301.1 616.2,300.5 618.7,301.7 621.2,300.3 623.7,299.8 626.2,299.6 628.7,298.4 631.2,296.6 633.7,296.9 636.2,301.0 638.8,304.7 641.3,302.7 643.8,303.2 646.3,300.9 648.8,302.0 651.3,300.7 653.8,299.3 656.3,302.3 658.8,302.8 661.3,306.5" fill="none" stroke="#2a6fb0" stroke-width="0.9"/>
<polygon points="32.5,363.9 32.5,322.1 35.0,320.4 37.5,320.3 40.0,320.4 42.5,321.6 45.0,322.2 47.5,321.7 50.0,321.8 52.5,320.6 55.0,322.6 57.6,323.4 60.1,325.7 62.6,323.1 65.1,321.8 67.6,321.8 70.1,321.7 72.6,321.0 75.1,319.0 77.6,319.5 80.1,321.9 82.6,323.6 85.1,324.0 87.6,323.9 90.1,323.3 92.6,324.3 95.1,323.9 97.6,323.3 100.1,322.9 102.6,320.2 105.2,319.8 107.7,319.1 110.2,321.2 112.7,319.4 115.2,317.6 117.7,320.2 120.2,320.2 122.7,318.7 125.2,316.8 127.7,317.3 130.2,319.2 132.7,321.6 135.2,323.5 137.7,324.4 140.2,322.4 142.7,321.4 145.2,318.6 147.7,319.7 150.2,318.5 152.7,319.1 155.3,320.9 157.8,323.5 160.3,322.8 162.8,320.7 165.3,317.8 167.8,319.1 170.3,320.7 172.8,322.1 175.3,321.5 177.8,320.4 180.3,322.8 182.8,323.9 185.3,321.8 187.8,319.0 190.3,320.3 192.8,323.2 195.3,325.5 197.8,325.5 200.3,323.2 202.9,323.0 205.4,320.7 207.9,321.7 210.4,321.4 212.9,321.7 215.4,322.7 217.9,321.6 220.4,323.1 222.9,322.8 225.4,323.8 227.9,323.9 230.4,321.5 232.9,319.7 235.4,319.5 237.9,319.6 240.4,321.7 242.9,321.4 245.4,321.9 247.9,320.4 250.5,321.0 253.0,319.9 255.5,321.1 258.0,320.8 260.5,322.4 263.0,321.9 265.5,321.9 268.0,323.1 270.5,323.9 273.0,323.1 275.5,323.1 278.0,321.7 280.5,322.2 283.0,321.5 285.5,320.1 288.0,320.2 290.5,320.4 293.0,320.1 295.5,320.4 298.0,321.3 300.6,321.9 303.1,320.7 305.6,320.7 308.1,322.6 310.6,322.6 313.1,320.5 315.6,320.6 318.1,320.0 320.6,320.3 323.1,318.9 325.6,320.5 328.1,322.5 330.6,324.1 333.1,322.5 335.6,322.2 338.1,320.6 340.6,322.6 343.1,320.9 345.6,321.3 348.2,322.2 350.7,323.9 353.2,323.0 355.7,323.3 358.2,323.7 360.7,324.2 363.2,321.6 365.7,320.5 368.2,321.8 370.7,321.8 373.2,322.9 375.7,323.6 378.2,325.8 380.7,324.6 383.2,324.1 385.7,324.0 388.2,324.6 390.7,323.0 393.2,322.6 395.8,323.0 398.3,322.2 400.8,319.7 403.3,318.7 405.8,319.0 408.3,320.2 410.8,320.9 413.3,323.1 415.8,324.9 418.3,322.5 420.8,320.9 423.3,318.2 425.8,321.2 428.3,320.7 430.8,322.7 433.3,320.6 435.8,322.0 438.3,319.4 440.8,321.3 443.3,320.7 445.9,322.1 448.4,319.5 450.9,318.3 453.4,318.0 455.9,318.3 458.4,318.3 460.9,320.0 463.4,320.3 465.9,319.9 468.4,318.2 470.9,318.6 473.4,318.8 475.9,319.3 478.4,319.0 480.9,320.2 483.4,321.6 485.9,322.1 488.4,322.5 490.9,323.3 493.5,322.5 496.0,321.2 498.5,318.1 501.0,318.0 503.5,319.7 506.0,321.1 508.5,321.3 511.0,321.1 513.5,320.2 516.0,322.4 518.5,321.1 521.0,323.8 523.5,321.9 526.0,322.3 528.5,321.3 531.0,323.2 533.5,326.7 536.0,329.1 538.5,327.2 541.1,325.2 543.6,322.1 546.1,321.6 548.6,317.9 551.1,315.7 553.6,316.3 556.1,316.1 558.6,314.8 561.1,313.9 563.6,314.1 566.1,314.7 568.6,313.1 571.1,315.0 573.6,318.8 576.1,321.4 578.6,319.1 581.1,317.3 583.6,318.6 586.1,319.5 588.6,321.8 591.2,322.7 593.7,322.9 596.2,321.0 598.7,318.4 601.2,317.6 603.7,317.4 606.2,318.9 608.7,320.9 611.2,322.2 613.7,322.2 616.2,321.9 618.7,322.5 621.2,321.5 623.7,321.3 626.2,320.8 628.7,320.3 631.2,318.7 633.7,319.1 636.2,321.4 638.8,323.9 641.3,322.4 643.8,322.8 646.3,321.2 648.8,322.1 651.3,321.2 653.8,320.2 656.3,322.8 658.8,323.4 661.3,326.4 661.3,363.9" fill="#3f6387"/>
<polyline points="32.5,322.1 35.0,320.4 37.5,320.3 40.0,320.4 42.5,321.6 45.0,322.2 47.5,321.7 50.0,321.8 52.5,320.6 55.0,322.6 57.6,323.4 60.1,325.7 62.6,323.1 65.1,321.8 67.6,321.8 70.1,321.7 72.6,321.0 75.1,319.0 77.6,319.5 80.1,321.9 82.6,323.6 85.1,324.0 87.6,323.9 90.1,323.3 92.6,324.3 95.1,323.9 97.6,323.3 100.1,322.9 102.6,320.2 105.2,319.8 107.7,319.1 110.2,321.2 112.7,319.4 115.2,317.6 117.7,320.2 120.2,320.2 122.7,318.7 125.2,316.8 127.7,317.3 130.2,319.2 132.7,321.6 135.2,323.5 137.7,324.4 140.2,322.4 142.7,321.4 145.2,318.6 147.7,319.7 150.2,318.5 152.7,319.1 155.3,320.9 157.8,323.5 160.3,322.8 162.8,320.7 165.3,317.8 167.8,319.1 170.3,320.7 172.8,322.1 175.3,321.5 177.8,320.4 180.3,322.8 182.8,323.9 185.3,321.8 187.8,319.0 190.3,320.3 192.8,323.2 195.3,325.5 197.8,325.5 200.3,323.2 202.9,323.0 205.4,320.7 207.9,321.7 210.4,321.4 212.9,321.7 215.4,322.7 217.9,321.6 220.4,323.1 222.9,322.8 225.4,323.8 227.9,323.9 230.4,321.5 232.9,319.7 235.4,319.5 237.9,319.6 240.4,321.7 242.9,321.4 245.4,321.9 247.9,320.4 250.5,321.0 253.0,319.9 255.5,321.1 258.0,320.8 260.5,322.4 263.0,321.9 265.5,321.9 268.0,323.1 270.5,323.9 273.0,323.1 275.5,323.1 278.0,321.7 280.5,322.2 283.0,321.5 285.5,320.1 288.0,320.2 290.5,320.4 293.0,320.1 295.5,320.4 298.0,321.3 300.6,321.9 303.1,320.7 305.6,320.7 308.1,322.6 310.6,322.6 313.1,320.5 315.6,320.6 318.1,320.0 320.6,320.3 323.1,318.9 325.6,320.5 328.1,322.5 330.6,324.1 333.1,322.5 335.6,322.2 338.1,320.6 340.6,322.6 343.1,320.9 345.6,321.3 348.2,322.2 350.7,323.9 353.2,323.0 355.7,323.3 358.2,323.7 360.7,324.2 363.2,321.6 365.7,320.5 368.2,321.8 370.7,321.8 373.2,322.9 375.7,323.6 378.2,325.8 380.7,324.6 383.2,324.1 385.7,324.0 388.2,324.6 390.7,323.0 393.2,322.6 395.8,323.0 398.3,322.2 400.8,319.7 403.3,318.7 405.8,319.0 408.3,320.2 410.8,320.9 413.3,323.1 415.8,324.9 418.3,322.5 420.8,320.9 423.3,318.2 425.8,321.2 428.3,320.7 430.8,322.7 433.3,320.6 435.8,322.0 438.3,319.4 440.8,321.3 443.3,320.7 445.9,322.1 448.4,319.5 450.9,318.3 453.4,318.0 455.9,318.3 458.4,318.3 460.9,320.0 463.4,320.3 465.9,319.9 468.4,318.2 470.9,318.6 473.4,318.8 475.9,319.3 478.4,319.0 480.9,320.2 483.4,321.6 485.9,322.1 488.4,322.5 490.9,323.3 493.5,322.5 496.0,321.2 498.5,318.1 501.0,318.0 503.5,319.7 506.0,321.1 508.5,321.3 511.0,321.1 513.5,320.2 516.0,322.4 518.5,321.1 521.0,323.8 523.5,321.9 526.0,322.3 528.5,321.3 531.0,323.2 533.5,326.7 536.0,329.1 538.5,327.2 541.1,325.2 543.6,322.1 546.1,321.6 548.6,317.9 551.1,315.7 553.6,316.3 556.1,316.1 558.6,314.8 561.1,313.9 563.6,314.1 566.1,314.7 568.6,313.1 571.1,315.0 573.6,318.8 576.1,321.4 578.6,319.1 581.1,317.3 583.6,318.6 586.1,319.5 588.6,321.8 591.2,322.7 593.7,322.9 596.2,321.0 598.7,318.4 601.2,317.6 603.7,317.4 606.2,318.9 608.7,320.9 611.2,322.2 613.7,322.2 616.2,321.9 618.7,322.5 621.2,321.5 623.7,321.3 626.2,320.8 628.7,320.3 631.2,318.7 633.7,319.1 636.2,321.4 638.8,323.9 641.3,322.4 643.8,322.8 646.3,321.2 648.8,322.1 651.3,321.2 653.8,320.2 656.3,322.8 658.8,323.4 661.3,326.4" fill="none" stroke="#5a8fc0" stroke-width="0.9"/>
<polygon points="32.5,363.9 32.5,342.6 35.0,341.9 37.5,341.9 40.0,341.7 42.5,342.2 45.0,342.5 47.5,342.6 50.0,342.4 52.5,341.8 55.0,342.6 57.6,343.1 60.1,344.3 62.6,343.2 65.1,342.9 67.6,342.9 70.1,342.6 72.6,342.2 75.1,341.1 77.6,341.5 80.1,342.6 82.6,343.5 85.1,343.7 87.6,343.7 90.1,343.2 92.6,343.8 95.1,343.7 97.6,343.7 100.1,343.3 102.6,342.0 105.2,341.9 107.7,341.3 110.2,342.2 112.7,341.3 115.2,340.9 117.7,342.2 120.2,342.0 122.7,341.2 125.2,340.1 127.7,340.5 130.2,341.4 132.7,342.7 135.2,343.3 137.7,343.7 140.2,342.8 142.7,342.5 145.2,341.2 147.7,341.8 150.2,341.1 152.7,341.2 155.3,342.1 157.8,343.5 160.3,343.4 162.8,342.3 165.3,340.9 167.8,341.4 170.3,342.1 172.8,342.9 175.3,342.2 177.8,341.8 180.3,342.8 182.8,343.7 185.3,342.8 187.8,341.6 190.3,341.9 192.8,343.2 195.3,344.3 197.8,344.3 200.3,343.1 202.9,342.9 205.4,342.1 207.9,342.6 210.4,342.6 212.9,342.7 215.4,343.3 217.9,342.6 220.4,343.6 222.9,343.4 225.4,344.0 227.9,343.8 230.4,342.6 232.9,341.6 235.4,341.4 237.9,341.6 240.4,342.6 242.9,342.5 245.4,342.3 247.9,341.6 250.5,341.8 253.0,341.5 255.5,342.1 258.0,342.2 260.5,342.9 263.0,342.7 265.5,342.4 268.0,343.2 270.5,343.9 273.0,343.8 275.5,343.4 278.0,342.4 280.5,342.7 283.0,342.4 285.5,341.7 288.0,341.8 290.5,341.9 293.0,341.8 295.5,341.9 298.0,342.3 300.6,342.7 303.1,342.1 305.6,342.3 308.1,343.2 310.6,343.0 313.1,342.0 315.6,341.9 318.1,341.9 320.6,342.0 323.1,341.3 325.6,341.9 328.1,342.8 330.6,344.0 333.1,343.2 335.6,343.3 338.1,342.2 340.6,343.2 343.1,342.0 345.6,342.2 348.2,342.5 350.7,343.6 353.2,343.2 355.7,343.3 358.2,343.5 360.7,343.9 363.2,342.9 365.7,342.0 368.2,342.4 370.7,342.2 373.2,342.7 375.7,343.2 378.2,344.3 380.7,344.0 383.2,343.6 385.7,343.8 388.2,344.0 390.7,343.6 393.2,343.4 395.8,343.5 398.3,343.0 400.8,341.7 403.3,340.9 405.8,341.0 408.3,341.8 410.8,342.4 413.3,343.8 415.8,344.7 418.3,343.4 420.8,342.3 423.3,340.8 425.8,342.2 428.3,342.0 430.8,342.9 433.3,342.0 435.8,342.8 438.3,341.6 440.8,342.7 443.3,342.5 445.9,342.9 448.4,341.5 450.9,340.8 453.4,340.8 455.9,340.7 458.4,340.7 460.9,341.4 463.4,341.8 465.9,341.9 468.4,341.2 470.9,341.3 473.4,341.2 475.9,341.4 478.4,341.5 480.9,342.1 483.4,342.8 485.9,342.7 488.4,342.7 490.9,343.3 493.5,343.1 496.0,342.4 498.5,340.9 501.0,340.6 503.5,341.6 506.0,342.1 508.5,342.5 511.0,342.1 513.5,342.0 516.0,343.1 518.5,342.7 521.0,343.8 523.5,342.6 526.0,342.9 528.5,342.5 531.0,343.9 533.5,346.1 536.0,347.4 538.5,346.3 541.1,344.8 543.6,343.3 546.1,342.7 548.6,340.7 551.1,339.6 553.6,339.9 556.1,340.0 558.6,338.9 561.1,338.4 563.6,338.3 566.1,339.1 568.6,338.6 571.1,339.6 573.6,341.2 576.1,342.5 578.6,341.4 581.1,340.5 583.6,341.0 586.1,341.5 588.6,342.6 591.2,342.9 593.7,342.8 596.2,341.8 598.7,340.7 601.2,340.2 603.7,340.2 606.2,340.9 608.7,341.8 611.2,342.6 613.7,342.5 616.2,342.4 618.7,342.6 621.2,342.3 623.7,342.1 626.2,342.1 628.7,341.9 631.2,341.3 633.7,341.4 636.2,342.5 638.8,343.7 641.3,343.0 643.8,343.4 646.3,342.7 648.8,343.2 651.3,342.8 653.8,342.3 656.3,343.4 658.8,343.6 661.3,345.1 661.3,363.9" fill="#7a909d"/>
<polyline points="32.5,342.6 35.0,341.9 37.5,341.9 40.0,341.7 42.5,342.2 45.0,342.5 47.5,342.6 50.0,342.4 52.5,341.8 55.0,342.6 57.6,343.1 60.1,344.3 62.6,343.2 65.1,342.9 67.6,342.9 70.1,342.6 72.6,342.2 75.1,341.1 77.6,341.5 80.1,342.6 82.6,343.5 85.1,343.7 87.6,343.7 90.1,343.2 92.6,343.8 95.1,343.7 97.6,343.7 100.1,343.3 102.6,342.0 105.2,341.9 107.7,341.3 110.2,342.2 112.7,341.3 115.2,340.9 117.7,342.2 120.2,342.0 122.7,341.2 125.2,340.1 127.7,340.5 130.2,341.4 132.7,342.7 135.2,343.3 137.7,343.7 140.2,342.8 142.7,342.5 145.2,341.2 147.7,341.8 150.2,341.1 152.7,341.2 155.3,342.1 157.8,343.5 160.3,343.4 162.8,342.3 165.3,340.9 167.8,341.4 170.3,342.1 172.8,342.9 175.3,342.2 177.8,341.8 180.3,342.8 182.8,343.7 185.3,342.8 187.8,341.6 190.3,341.9 192.8,343.2 195.3,344.3 197.8,344.3 200.3,343.1 202.9,342.9 205.4,342.1 207.9,342.6 210.4,342.6 212.9,342.7 215.4,343.3 217.9,342.6 220.4,343.6 222.9,343.4 225.4,344.0 227.9,343.8 230.4,342.6 232.9,341.6 235.4,341.4 237.9,341.6 240.4,342.6 242.9,342.5 245.4,342.3 247.9,341.6 250.5,341.8 253.0,341.5 255.5,342.1 258.0,342.2 260.5,342.9 263.0,342.7 265.5,342.4 268.0,343.2 270.5,343.9 273.0,343.8 275.5,343.4 278.0,342.4 280.5,342.7 283.0,342.4 285.5,341.7 288.0,341.8 290.5,341.9 293.0,341.8 295.5,341.9 298.0,342.3 300.6,342.7 303.1,342.1 305.6,342.3 308.1,343.2 310.6,343.0 313.1,342.0 315.6,341.9 318.1,341.9 320.6,342.0 323.1,341.3 325.6,341.9 328.1,342.8 330.6,344.0 333.1,343.2 335.6,343.3 338.1,342.2 340.6,343.2 343.1,342.0 345.6,342.2 348.2,342.5 350.7,343.6 353.2,343.2 355.7,343.3 358.2,343.5 360.7,343.9 363.2,342.9 365.7,342.0 368.2,342.4 370.7,342.2 373.2,342.7 375.7,343.2 378.2,344.3 380.7,344.0 383.2,343.6 385.7,343.8 388.2,344.0 390.7,343.6 393.2,343.4 395.8,343.5 398.3,343.0 400.8,341.7 403.3,340.9 405.8,341.0 408.3,341.8 410.8,342.4 413.3,343.8 415.8,344.7 418.3,343.4 420.8,342.3 423.3,340.8 425.8,342.2 428.3,342.0 430.8,342.9 433.3,342.0 435.8,342.8 438.3,341.6 440.8,342.7 443.3,342.5 445.9,342.9 448.4,341.5 450.9,340.8 453.4,340.8 455.9,340.7 458.4,340.7 460.9,341.4 463.4,341.8 465.9,341.9 468.4,341.2 470.9,341.3 473.4,341.2 475.9,341.4 478.4,341.5 480.9,342.1 483.4,342.8 485.9,342.7 488.4,342.7 490.9,343.3 493.5,343.1 496.0,342.4 498.5,340.9 501.0,340.6 503.5,341.6 506.0,342.1 508.5,342.5 511.0,342.1 513.5,342.0 516.0,343.1 518.5,342.7 521.0,343.8 523.5,342.6 526.0,342.9 528.5,342.5 531.0,343.9 533.5,346.1 536.0,347.4 538.5,346.3 541.1,344.8 543.6,343.3 546.1,342.7 548.6,340.7 551.1,339.6 553.6,339.9 556.1,340.0 558.6,338.9 561.1,338.4 563.6,338.3 566.1,339.1 568.6,338.6 571.1,339.6 573.6,341.2 576.1,342.5 578.6,341.4 581.1,340.5 583.6,341.0 586.1,341.5 588.6,342.6 591.2,342.9 593.7,342.8 596.2,341.8 598.7,340.7 601.2,340.2 603.7,340.2 606.2,340.9 608.7,341.8 611.2,342.6 613.7,342.5 616.2,342.4 618.7,342.6 621.2,342.3 623.7,342.1 626.2,342.1 628.7,341.9 631.2,341.3 633.7,341.4 636.2,342.5 638.8,343.7 641.3,343.0 643.8,343.4 646.3,342.7 648.8,343.2 651.3,342.8 653.8,342.3 656.3,343.4 658.8,343.6 661.3,345.1" fill="none" stroke="#a6c4d8" stroke-width="0.9"/>
<line x1="32.5" y1="363.9" x2="661.3" y2="363.9" stroke="rgba(204,204,220,0.09)" stroke-width="1" />
<text x="28.4" y="366.5" font-size="7.4" fill="#ccccdc" stroke="#ccccdc" stroke-width="0.14" text-anchor="end" font-weight="normal" >0</text>
<line x1="32.5" y1="326.4" x2="661.3" y2="326.4" stroke="rgba(204,204,220,0.09)" stroke-width="1" />
<text x="28.4" y="329.0" font-size="7.4" fill="#ccccdc" stroke="#ccccdc" stroke-width="0.14" text-anchor="end" font-weight="normal" >50</text>
<line x1="32.5" y1="288.9" x2="661.3" y2="288.9" stroke="rgba(204,204,220,0.09)" stroke-width="1" />
<text x="28.4" y="291.5" font-size="7.4" fill="#ccccdc" stroke="#ccccdc" stroke-width="0.14" text-anchor="end" font-weight="normal" >100</text>
<line x1="32.5" y1="251.4" x2="661.3" y2="251.4" stroke="rgba(204,204,220,0.09)" stroke-width="1" />
<text x="28.4" y="254.0" font-size="7.4" fill="#ccccdc" stroke="#ccccdc" stroke-width="0.14" text-anchor="end" font-weight="normal" >150</text>
<line x1="34.3" y1="251.4" x2="34.3" y2="363.9" stroke="rgba(204,204,220,0.09)" stroke-width="1" />
<text x="34.3" y="375.8" font-size="7.4" fill="#ccccdc" stroke="#ccccdc" stroke-width="0.14" text-anchor="middle" font-weight="normal" >16:50</text>
<line x1="86.69999999999999" y1="251.4" x2="86.69999999999999" y2="363.9" stroke="rgba(204,204,220,0.09)" stroke-width="1" />
<text x="86.7" y="375.8" font-size="7.4" fill="#ccccdc" stroke="#ccccdc" stroke-width="0.14" text-anchor="middle" font-weight="normal" >16:55</text>
<line x1="139.1" y1="251.4" x2="139.1" y2="363.9" stroke="rgba(204,204,220,0.09)" stroke-width="1" />
<text x="139.1" y="375.8" font-size="7.4" fill="#ccccdc" stroke="#ccccdc" stroke-width="0.14" text-anchor="middle" font-weight="normal" >17:00</text>
<line x1="191.5" y1="251.4" x2="191.5" y2="363.9" stroke="rgba(204,204,220,0.09)" stroke-width="1" />
<text x="191.5" y="375.8" font-size="7.4" fill="#ccccdc" stroke="#ccccdc" stroke-width="0.14" text-anchor="middle" font-weight="normal" >17:05</text>
<line x1="243.89999999999998" y1="251.4" x2="243.89999999999998" y2="363.9" stroke="rgba(204,204,220,0.09)" stroke-width="1" />
<text x="243.9" y="375.8" font-size="7.4" fill="#ccccdc" stroke="#ccccdc" stroke-width="0.14" text-anchor="middle" font-weight="normal" >17:10</text>
<line x1="296.3" y1="251.4" x2="296.3" y2="363.9" stroke="rgba(204,204,220,0.09)" stroke-width="1" />
<text x="296.3" y="375.8" font-size="7.4" fill="#ccccdc" stroke="#ccccdc" stroke-width="0.14" text-anchor="middle" font-weight="normal" >17:15</text>
<line x1="348.7" y1="251.4" x2="348.7" y2="363.9" stroke="rgba(204,204,220,0.09)" stroke-width="1" />
<text x="348.7" y="375.8" font-size="7.4" fill="#ccccdc" stroke="#ccccdc" stroke-width="0.14" text-anchor="middle" font-weight="normal" >17:20</text>
<line x1="401.1" y1="251.4" x2="401.1" y2="363.9" stroke="rgba(204,204,220,0.09)" stroke-width="1" />
<text x="401.1" y="375.8" font-size="7.4" fill="#ccccdc" stroke="#ccccdc" stroke-width="0.14" text-anchor="middle" font-weight="normal" >17:25</text>
<line x1="453.5" y1="251.4" x2="453.5" y2="363.9" stroke="rgba(204,204,220,0.09)" stroke-width="1" />
<text x="453.5" y="375.8" font-size="7.4" fill="#ccccdc" stroke="#ccccdc" stroke-width="0.14" text-anchor="middle" font-weight="normal" >17:30</text>
<line x1="505.9" y1="251.4" x2="505.9" y2="363.9" stroke="rgba(204,204,220,0.09)" stroke-width="1" />
<text x="505.9" y="375.8" font-size="7.4" fill="#ccccdc" stroke="#ccccdc" stroke-width="0.14" text-anchor="middle" font-weight="normal" >17:35</text>
<line x1="558.3" y1="251.4" x2="558.3" y2="363.9" stroke="rgba(204,204,220,0.09)" stroke-width="1" />
<text x="558.3" y="375.8" font-size="7.4" fill="#ccccdc" stroke="#ccccdc" stroke-width="0.14" text-anchor="middle" font-weight="normal" >17:40</text>
<line x1="610.6999999999999" y1="251.4" x2="610.6999999999999" y2="363.9" stroke="rgba(204,204,220,0.09)" stroke-width="1" />
<text x="610.7" y="375.8" font-size="7.4" fill="#ccccdc" stroke="#ccccdc" stroke-width="0.14" text-anchor="middle" font-weight="normal" >17:45</text>
<rect x="21.2" y="387.4" width="8.5" height="2.4" rx="1.2" fill="#cfe8f8"/>
<text x="38.3" y="391.2" font-size="7.6" fill="#ccccdc" stroke="#ccccdc" stroke-width="0.14" text-anchor="start" font-weight="normal" >web_server_01</text>
<rect x="100.8" y="387.4" width="8.5" height="2.4" rx="1.2" fill="#70b0e0"/>
<text x="116.9" y="391.2" font-size="7.6" fill="#ccccdc" stroke="#ccccdc" stroke-width="0.14" text-anchor="start" font-weight="normal" >web_server_02</text>
<rect x="180" y="387.4" width="8.5" height="2.4" rx="1.2" fill="#3d8fd5"/>
<text x="196.5" y="391.2" font-size="7.6" fill="#ccccdc" stroke="#ccccdc" stroke-width="0.14" text-anchor="start" font-weight="normal" >web_server_03</text>
<rect x="259.7" y="387.4" width="8.5" height="2.4" rx="1.2" fill="#1d4f86"/>
<text x="276.1" y="391.2" font-size="7.6" fill="#ccccdc" stroke="#ccccdc" stroke-width="0.14" text-anchor="start" font-weight="normal" >web_server_04</text>
<rect x="683.5" y="220.5" width="330" height="179" rx="2" fill="#181b1f" stroke="rgba(204,204,220,0.045)" stroke-width="1"/>
<text x="688.4" y="233.8" font-size="9.2" fill="#ccccdc" stroke="#ccccdc" stroke-width="0.32" text-anchor="start" font-weight="normal" >Google hits</text>
<rect x="688.2" y="262.3" width="59.3" height="119.69999999999999" fill="#232429" />
<rect x="688.2" y="380.4" width="59.3" height="1.6" fill="#2e4a72" />
<rect x="688.2" y="380.4" width="59.3" height="1.5" fill="#5794f2" />
<text x="717.9" y="258.8" font-size="16" fill="#5794f2" stroke="#5794f2" stroke-width="0.32" text-anchor="middle" font-weight="normal" >0.400</text>
<text x="717.9" y="392.2" font-size="9" fill="#ccccdc" stroke="#ccccdc" stroke-width="0.14" text-anchor="middle" font-weight="normal" ></text>
<rect x="753.4" y="262.3" width="59.3" height="119.69999999999999" fill="#232429" />
<rect x="753.4" y="348.206" width="59.3" height="33.794" fill="#2e4a72" />
<rect x="753.4" y="348.206" width="59.3" height="1.5" fill="#5794f2" />
<text x="783.0" y="258.8" font-size="16" fill="#5794f2" stroke="#5794f2" stroke-width="0.32" text-anchor="middle" font-weight="normal" >27.7</text>
<text x="783.0" y="392.2" font-size="9" fill="#ccccdc" stroke="#ccccdc" stroke-width="0.14" text-anchor="middle" font-weight="normal" ></text>
<rect x="818.6" y="262.3" width="59.3" height="119.69999999999999" fill="#232429" />
<rect x="818.6" y="336.738" width="59.3" height="45.262" fill="#2e4a72" />
<rect x="818.6" y="336.738" width="59.3" height="1.5" fill="#5794f2" />
<text x="848.2" y="258.8" font-size="16" fill="#5794f2" stroke="#5794f2" stroke-width="0.32" text-anchor="middle" font-weight="normal" >37.1</text>
<text x="848.2" y="392.2" font-size="9" fill="#ccccdc" stroke="#ccccdc" stroke-width="0.14" text-anchor="middle" font-weight="normal" ></text>
<rect x="883.8" y="262.3" width="59.3" height="119.69999999999999" fill="#232429" />
<rect x="883.8" y="300.87" width="59.3" height="81.13000000000001" fill="#543e67" />
<rect x="883.8" y="300.87" width="59.3" height="1.5" fill="#b877d9" />
<text x="913.4" y="258.8" font-size="16" fill="#b877d9" stroke="#b877d9" stroke-width="0.32" text-anchor="middle" font-weight="normal" >66.5</text>
<text x="913.4" y="392.2" font-size="9" fill="#ccccdc" stroke="#ccccdc" stroke-width="0.14" text-anchor="middle" font-weight="normal" ></text>
<rect x="949.2" y="262.3" width="59.3" height="119.69999999999999" fill="#232429" />
<rect x="949.2" y="356.136" width="59.3" height="25.864" fill="#2e4a72" />
<rect x="949.2" y="356.136" width="59.3" height="1.5" fill="#5794f2" />
<text x="978.9" y="258.8" font-size="16" fill="#5794f2" stroke="#5794f2" stroke-width="0.32" text-anchor="middle" font-weight="normal" >21.2</text>
<text x="978.9" y="392.2" font-size="9" fill="#ccccdc" stroke="#ccccdc" stroke-width="0.14" text-anchor="middle" font-weight="normal" ></text>
<text x="717.9" y="392.3" font-size="9.2" fill="#ccccdc" stroke="#ccccdc" stroke-width="0.14" text-anchor="middle" font-weight="normal" >A-series</text>
<text x="783.0" y="392.3" font-size="9.2" fill="#ccccdc" stroke="#ccccdc" stroke-width="0.14" text-anchor="middle" font-weight="normal" >B-series</text>
<text x="848.2" y="392.3" font-size="9.2" fill="#ccccdc" stroke="#ccccdc" stroke-width="0.14" text-anchor="middle" font-weight="normal" >C-series</text>
<text x="913.4" y="392.3" font-size="9.2" fill="#ccccdc" stroke="#ccccdc" stroke-width="0.14" text-anchor="middle" font-weight="normal" >D-series</text>
<text x="978.9" y="392.3" font-size="9.2" fill="#ccccdc" stroke="#ccccdc" stroke-width="0.14" text-anchor="middle" font-weight="normal" >E-series</text>
<rect x="10.5" y="405.5" width="1003" height="157" rx="2" fill="#181b1f" stroke="rgba(204,204,220,0.045)" stroke-width="1"/>
<text x="512.0" y="419.2" font-size="9.2" fill="#ccccdc" stroke="#ccccdc" stroke-width="0.32" text-anchor="middle" font-weight="normal" >client side full page load</text>
<line x1="36" y1="542.3" x2="904.5" y2="542.3" stroke="rgba(204,204,220,0.10)" stroke-width="1" />
<text x="32.4" y="544.9" font-size="7.4" fill="#ccccdc" stroke="#ccccdc" stroke-width="0.14" text-anchor="end" font-weight="normal" >0 ms</text>
<line x1="36" y1="521.0999999999999" x2="904.5" y2="521.0999999999999" stroke="rgba(204,204,220,0.10)" stroke-width="1" />
<text x="32.4" y="523.7" font-size="7.4" fill="#ccccdc" stroke="#ccccdc" stroke-width="0.14" text-anchor="end" font-weight="normal" >1 s</text>
<line x1="36" y1="499.9" x2="904.5" y2="499.9" stroke="rgba(204,204,220,0.10)" stroke-width="1" />
<text x="32.4" y="502.5" font-size="7.4" fill="#ccccdc" stroke="#ccccdc" stroke-width="0.14" text-anchor="end" font-weight="normal" >2 s</text>
<line x1="36" y1="478.69999999999993" x2="904.5" y2="478.69999999999993" stroke="rgba(204,204,220,0.10)" stroke-width="1" />
<text x="32.4" y="481.3" font-size="7.4" fill="#ccccdc" stroke="#ccccdc" stroke-width="0.14" text-anchor="end" font-weight="normal" >3 s</text>
<line x1="36" y1="457.49999999999994" x2="904.5" y2="457.49999999999994" stroke="rgba(204,204,220,0.10)" stroke-width="1" />
<text x="32.4" y="460.1" font-size="7.4" fill="#ccccdc" stroke="#ccccdc" stroke-width="0.14" text-anchor="end" font-weight="normal" >4 s</text>
<line x1="36" y1="436.29999999999995" x2="904.5" y2="436.29999999999995" stroke="rgba(204,204,220,0.10)" stroke-width="1" />
<text x="32.4" y="438.9" font-size="7.4" fill="#ccccdc" stroke="#ccccdc" stroke-width="0.14" text-anchor="end" font-weight="normal" >5 s</text>
<line x1="39.5" y1="436.3" x2="39.5" y2="542.3" stroke="rgba(204,204,220,0.10)" stroke-width="1" />
<text x="39.5" y="554.3" font-size="7.4" fill="#ccccdc" stroke="#ccccdc" stroke-width="0.14" text-anchor="middle" font-weight="normal" >16:50</text>
<line x1="111.75" y1="436.3" x2="111.75" y2="542.3" stroke="rgba(204,204,220,0.10)" stroke-width="1" />
<text x="111.8" y="554.3" font-size="7.4" fill="#ccccdc" stroke="#ccccdc" stroke-width="0.14" text-anchor="middle" font-weight="normal" >16:55</text>
<line x1="184.0" y1="436.3" x2="184.0" y2="542.3" stroke="rgba(204,204,220,0.10)" stroke-width="1" />
<text x="184.0" y="554.3" font-size="7.4" fill="#ccccdc" stroke="#ccccdc" stroke-width="0.14" text-anchor="middle" font-weight="normal" >17:00</text>
<line x1="256.25" y1="436.3" x2="256.25" y2="542.3" stroke="rgba(204,204,220,0.10)" stroke-width="1" />
<text x="256.2" y="554.3" font-size="7.4" fill="#ccccdc" stroke="#ccccdc" stroke-width="0.14" text-anchor="middle" font-weight="normal" >17:05</text>
<line x1="328.5" y1="436.3" x2="328.5" y2="542.3" stroke="rgba(204,204,220,0.10)" stroke-width="1" />
<text x="328.5" y="554.3" font-size="7.4" fill="#ccccdc" stroke="#ccccdc" stroke-width="0.14" text-anchor="middle" font-weight="normal" >17:10</text>
<line x1="400.75" y1="436.3" x2="400.75" y2="542.3" stroke="rgba(204,204,220,0.10)" stroke-width="1" />
<text x="400.8" y="554.3" font-size="7.4" fill="#ccccdc" stroke="#ccccdc" stroke-width="0.14" text-anchor="middle" font-weight="normal" >17:15</text>
<line x1="473.0" y1="436.3" x2="473.0" y2="542.3" stroke="rgba(204,204,220,0.10)" stroke-width="1" />
<text x="473.0" y="554.3" font-size="7.4" fill="#ccccdc" stroke="#ccccdc" stroke-width="0.14" text-anchor="middle" font-weight="normal" >17:20</text>
<line x1="545.25" y1="436.3" x2="545.25" y2="542.3" stroke="rgba(204,204,220,0.10)" stroke-width="1" />
<text x="545.2" y="554.3" font-size="7.4" fill="#ccccdc" stroke="#ccccdc" stroke-width="0.14" text-anchor="middle" font-weight="normal" >17:25</text>
<line x1="617.5" y1="436.3" x2="617.5" y2="542.3" stroke="rgba(204,204,220,0.10)" stroke-width="1" />
<text x="617.5" y="554.3" font-size="7.4" fill="#ccccdc" stroke="#ccccdc" stroke-width="0.14" text-anchor="middle" font-weight="normal" >17:30</text>
<line x1="689.75" y1="436.3" x2="689.75" y2="542.3" stroke="rgba(204,204,220,0.10)" stroke-width="1" />
<text x="689.8" y="554.3" font-size="7.4" fill="#ccccdc" stroke="#ccccdc" stroke-width="0.14" text-anchor="middle" font-weight="normal" >17:35</text>
<line x1="762.0" y1="436.3" x2="762.0" y2="542.3" stroke="rgba(204,204,220,0.10)" stroke-width="1" />
<text x="762.0" y="554.3" font-size="7.4" fill="#ccccdc" stroke="#ccccdc" stroke-width="0.14" text-anchor="middle" font-weight="normal" >17:40</text>
<line x1="834.25" y1="436.3" x2="834.25" y2="542.3" stroke="rgba(204,204,220,0.10)" stroke-width="1" />
<text x="834.2" y="554.3" font-size="7.4" fill="#ccccdc" stroke="#ccccdc" stroke-width="0.14" text-anchor="middle" font-weight="normal" >17:45</text>
<rect x="36" y="471.2" width="12.899999999999999" height="71.09999999999997" fill="#e24d42" />
<rect x="36" y="507.1" width="12.899999999999999" height="35.19999999999993" fill="#ef843c" />
<rect x="36" y="528.8" width="12.899999999999999" height="13.5" fill="#eab839" />
<rect x="36" y="540.3240707458161" width="12.899999999999999" height="1.975929254183825" fill="#f4d58d" />
<rect x="36" y="541.5999999999999" width="12.899999999999999" height="0.7" fill="#fbeee0" />
<rect x="68.3" y="497.4" width="38.400000000000006" height="44.89999999999998" fill="#e24d42" />
<rect x="68.3" y="517" width="38.400000000000006" height="25.299999999999955" fill="#ef843c" />
<rect x="68.3" y="533.1" width="38.400000000000006" height="9.199999999999932" fill="#eab839" />
<rect x="68.3" y="539.711541549408" width="38.400000000000006" height="2.5884584505919292" fill="#f4d58d" />
<rect x="68.3" y="541.5999999999999" width="38.400000000000006" height="0.7" fill="#fbeee0" />
<rect x="126.1" y="475.7" width="38.400000000000006" height="66.59999999999997" fill="#e24d42" />
<rect x="126.1" y="507.1" width="38.400000000000006" height="35.19999999999993" fill="#ef843c" />
<rect x="126.1" y="528.4" width="38.400000000000006" height="13.899999999999977" fill="#eab839" />
<rect x="126.1" y="540.0600896669038" width="38.400000000000006" height="2.2399103330961907" fill="#f4d58d" />
<rect x="126.1" y="541.5999999999999" width="38.400000000000006" height="0.7" fill="#fbeee0" />
<rect x="184" y="477" width="38.5" height="65.29999999999995" fill="#e24d42" />
<rect x="184" y="508" width="38.5" height="34.299999999999955" fill="#ef843c" />
<rect x="184" y="530" width="38.5" height="12.299999999999955" fill="#eab839" />
<rect x="184" y="539.5921599228076" width="38.5" height="2.7078400771923725" fill="#f4d58d" />
<rect x="184" y="541.5999999999999" width="38.5" height="0.7" fill="#fbeee0" />
<rect x="242" y="482.5" width="38.5" height="59.799999999999955" fill="#e24d42" />
<rect x="242" y="511" width="38.5" height="31.299999999999955" fill="#ef843c" />
<rect x="242" y="531" width="38.5" height="11.299999999999955" fill="#eab839" />
<rect x="242" y="539.5485593917839" width="38.5" height="2.7514406082160576" fill="#f4d58d" />
<rect x="242" y="541.5999999999999" width="38.5" height="0.7" fill="#fbeee0" />
<rect x="299.5" y="484.5" width="38.5" height="57.799999999999955" fill="#e24d42" />
<rect x="299.5" y="509" width="38.5" height="33.299999999999955" fill="#ef843c" />
<rect x="299.5" y="530" width="38.5" height="12.299999999999955" fill="#eab839" />
<rect x="299.5" y="540.6689422815203" width="38.5" height="1.6310577184796102" fill="#f4d58d" />
<rect x="299.5" y="541.5999999999999" width="38.5" height="0.7" fill="#fbeee0" />
<rect x="357.5" y="484.5" width="38.5" height="57.799999999999955" fill="#e24d42" />
<rect x="357.5" y="513" width="38.5" height="29.299999999999955" fill="#ef843c" />
<rect x="357.5" y="531" width="38.5" height="11.299999999999955" fill="#eab839" />
<rect x="357.5" y="540.7736640168902" width="38.5" height="1.5263359831097887" fill="#f4d58d" />
<rect x="357.5" y="541.5999999999999" width="38.5" height="0.7" fill="#fbeee0" />
<rect x="415.5" y="476.5" width="38.5" height="65.79999999999995" fill="#e24d42" />
<rect x="415.5" y="505.5" width="38.5" height="36.799999999999955" fill="#ef843c" />
<rect x="415.5" y="528" width="38.5" height="14.299999999999955" fill="#eab839" />
<rect x="415.5" y="539.1250618358071" width="38.5" height="3.174938164192895" fill="#f4d58d" />
<rect x="415.5" y="541.5999999999999" width="38.5" height="0.7" fill="#fbeee0" />
<rect x="473" y="458.5" width="38.5" height="83.79999999999995" fill="#e24d42" />
<rect x="473" y="498" width="38.5" height="44.299999999999955" fill="#ef843c" />
<rect x="473" y="526" width="38.5" height="16.299999999999955" fill="#eab839" />
<rect x="473" y="540.281291971344" width="38.5" height="2.018708028655965" fill="#f4d58d" />
<rect x="473" y="541.5999999999999" width="38.5" height="0.7" fill="#fbeee0" />
<rect x="531" y="481" width="38.5" height="61.299999999999955" fill="#e24d42" />
<rect x="531" y="508" width="38.5" height="34.299999999999955" fill="#ef843c" />
<rect x="531" y="527.5" width="38.5" height="14.799999999999955" fill="#eab839" />
<rect x="531" y="540.3313380779066" width="38.5" height="1.9686619220933608" fill="#f4d58d" />
<rect x="531" y="541.5999999999999" width="38.5" height="0.7" fill="#fbeee0" />
<rect x="588.5" y="458.5" width="38.5" height="83.79999999999995" fill="#e24d42" />
<rect x="588.5" y="496" width="38.5" height="46.299999999999955" fill="#ef843c" />
<rect x="588.5" y="523.5" width="38.5" height="18.799999999999955" fill="#eab839" />
<rect x="588.5" y="538.808710328979" width="38.5" height="3.4912896710209225" fill="#f4d58d" />
<rect x="588.5" y="541.5999999999999" width="38.5" height="0.7" fill="#fbeee0" />
<rect x="646.5" y="475.5" width="38.5" height="66.79999999999995" fill="#e24d42" />
<rect x="646.5" y="506.5" width="38.5" height="35.799999999999955" fill="#ef843c" />
<rect x="646.5" y="530" width="38.5" height="12.299999999999955" fill="#eab839" />
<rect x="646.5" y="539.859472984955" width="38.5" height="2.4405270150449496" fill="#f4d58d" />
<rect x="646.5" y="541.5999999999999" width="38.5" height="0.7" fill="#fbeee0" />
<rect x="704.5" y="461.5" width="38.5" height="80.79999999999995" fill="#e24d42" />
<rect x="704.5" y="501.5" width="38.5" height="40.799999999999955" fill="#ef843c" />
<rect x="704.5" y="526.5" width="38.5" height="15.799999999999955" fill="#eab839" />
<rect x="704.5" y="539.1270770974512" width="38.5" height="3.1729229025487484" fill="#f4d58d" />
<rect x="704.5" y="541.5999999999999" width="38.5" height="0.7" fill="#fbeee0" />
<rect x="762" y="473" width="38.5" height="69.29999999999995" fill="#e24d42" />
<rect x="762" y="501.5" width="38.5" height="40.799999999999955" fill="#ef843c" />
<rect x="762" y="524" width="38.5" height="18.299999999999955" fill="#eab839" />
<rect x="762" y="539.8472935826013" width="38.5" height="2.4527064173986446" fill="#f4d58d" />
<rect x="762" y="541.5999999999999" width="38.5" height="0.7" fill="#fbeee0" />
<rect x="820" y="460" width="38.5" height="82.29999999999995" fill="#e24d42" />
<rect x="820" y="496.5" width="38.5" height="45.799999999999955" fill="#ef843c" />
<rect x="820" y="521.5" width="38.5" height="20.799999999999955" fill="#eab839" />
<rect x="820" y="539.5218637189116" width="38.5" height="2.7781362810883365" fill="#f4d58d" />
<rect x="820" y="541.5999999999999" width="38.5" height="0.7" fill="#fbeee0" />
<rect x="878" y="482.5" width="26.5" height="59.799999999999955" fill="#e24d42" />
<rect x="878" y="511.5" width="26.5" height="30.799999999999955" fill="#ef843c" />
<rect x="878" y="532.5" width="26.5" height="9.799999999999955" fill="#eab839" />
<rect x="878" y="540.498767151953" width="26.5" height="1.8012328480469932" fill="#f4d58d" />
<rect x="878" y="541.5999999999999" width="26.5" height="0.7" fill="#fbeee0" />
<text x="999.5" y="442.9" font-size="7.6" fill="#3d9bd6" stroke="#3d9bd6" stroke-width="0.14" text-anchor="end" font-weight="normal" >avg</text>
<rect x="918.1" y="453.3" width="8.8" height="2.4" rx="1.2" fill="#fbe9dc"/>
<text x="933.0" y="457.2" font-size="7.6" fill="#ccccdc" stroke="#ccccdc" stroke-width="0.14" text-anchor="start" font-weight="normal" >upper_25</text>
<text x="1004.4" y="457.2" font-size="7.6" fill="#ccccdc" stroke="#ccccdc" stroke-width="0.14" text-anchor="end" font-weight="normal" >6.81 ms</text>
<rect x="916.9" y="462.79999999999995" width="88.7" height="16.1" fill="#202227" />
<rect x="918.1" y="469.7" width="8.8" height="2.4" rx="1.2" fill="#f5d07a"/>
<text x="933.0" y="473.6" font-size="7.6" fill="#ccccdc" stroke="#ccccdc" stroke-width="0.14" text-anchor="start" font-weight="normal" >upper_50</text>
<text x="1004.4" y="473.6" font-size="7.6" fill="#ccccdc" stroke="#ccccdc" stroke-width="0.14" text-anchor="end" font-weight="normal" >142 ms</text>
<rect x="918.1" y="486.1" width="8.8" height="2.4" rx="1.2" fill="#ecbd35"/>
<text x="933.0" y="490.0" font-size="7.6" fill="#ccccdc" stroke="#ccccdc" stroke-width="0.14" text-anchor="start" font-weight="normal" >upper_75</text>
<text x="1004.4" y="490.0" font-size="7.6" fill="#ccccdc" stroke="#ccccdc" stroke-width="0.14" text-anchor="end" font-weight="normal" >535 ms</text>
<rect x="916.9" y="495.59999999999997" width="88.7" height="16.1" fill="#202227" />
<rect x="918.1" y="502.5" width="8.8" height="2.4" rx="1.2" fill="#ef8a3c"/>
<text x="933.0" y="506.4" font-size="7.6" fill="#ccccdc" stroke="#ccccdc" stroke-width="0.14" text-anchor="start" font-weight="normal" >upper_90</text>
<text x="1004.4" y="506.4" font-size="7.6" fill="#ccccdc" stroke="#ccccdc" stroke-width="0.14" text-anchor="end" font-weight="normal" >1.04 s</text>
<rect x="918.1" y="518.9" width="8.8" height="2.4" rx="1.2" fill="#e0473f"/>
<text x="933.0" y="522.8" font-size="7.6" fill="#ccccdc" stroke="#ccccdc" stroke-width="0.14" text-anchor="start" font-weight="normal" >upper_95</text>
<text x="1004.4" y="522.8" font-size="7.6" fill="#ccccdc" stroke="#ccccdc" stroke-width="0.14" text-anchor="end" font-weight="normal" >1.46 s</text>
</svg></body></html>
